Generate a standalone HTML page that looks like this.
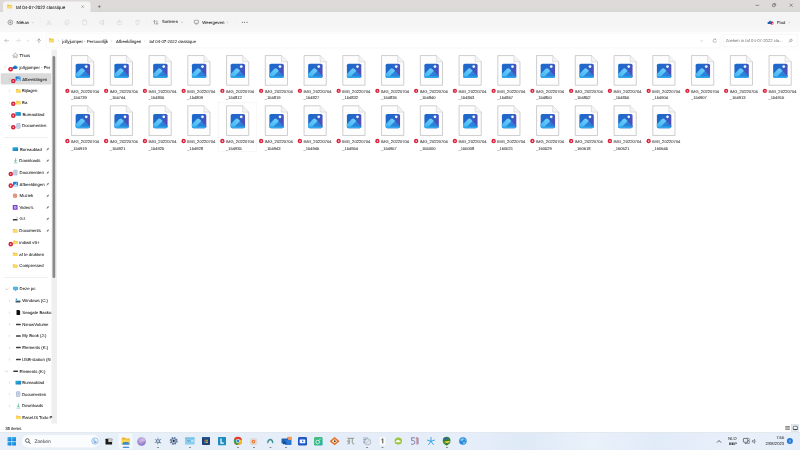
<!DOCTYPE html>
<html lang="nl">
<head>
<meta charset="utf-8">
<title>taf 04-07-2022 classique</title>
<style>
*{margin:0;padding:0;box-sizing:border-box}
html,body{width:3200px;height:1800px;overflow:hidden;background:#fff}
body{font-family:"Liberation Sans",sans-serif;color:#1b1b1b;position:relative}
.a{position:absolute}
.t{position:absolute;white-space:nowrap;line-height:1;color:#222;-webkit-text-stroke:0.24px currentColor}
svg{position:absolute;overflow:visible}
#titlebar{left:0;top:0;width:3200px;height:48px;background:linear-gradient(#dedad9,#dddad9 72%,#d8d8d6 80%,#d7d7d5)}
#tab{left:12px;top:6.4px;width:350.4px;height:42.4px;background:#f4f4f4;border-radius:12px 12px 0 0}
#toolbar{left:0;top:48px;width:3200px;height:78.8px;background:linear-gradient(#f4f4f4,#f5f5f5 70%,#f9f9f9);border-bottom:2.4px solid #e3e3e3}
#navrow{left:0;top:126.4px;width:3200px;height:73.6px;background:#fefefe}
#addr{left:184.8px;top:132px;width:2696px;height:60px;background:#fff;border:2px solid #f1f1f1;border-radius:6px}
#search{left:2892px;top:136.8px;width:298px;height:51.2px;background:#fff;border:2px solid #eeeeee;border-radius:6px}
#sel{left:3.2px;top:293.2px;width:201.6px;height:44.4px;background:#dadada;border-radius:4px}
#track{left:205.6px;top:198.4px;width:22.4px;height:1496px;background:#efefef}
#thumb{left:209.6px;top:224px;width:11.2px;height:888px;background:#898989;border-radius:5.6px}
#taskbar{left:0;top:1727.6px;width:3200px;height:72.4px;background:linear-gradient(90deg,#e9f0f9 0%,#e7eff9 20%,#e4edf8 45%,#e6eef9 58%,#dfeaf7 66%,#e9f1fa 74%,#e1ebf8 82%,#e8f0fa 92%,#e6eff9 100%);border-top:2.4px solid #d4dae1}
#pill{left:86px;top:1738px;width:313.2px;height:52.8px;background:#fbfcfe;border-radius:26.8px;border:1.6px solid #dde3ea}
.sep{position:absolute;height:2.4px;background:#e4dcdc;left:14.4px;width:177.6px}
.lbl{position:absolute;white-space:nowrap;font-size:16.32px;line-height:25.6px;color:#333;-webkit-text-stroke:0.24px currentColor}
.badge{position:absolute;width:18.4px;height:18.4px;border-radius:50%;background:#d8203a}
.badge:after{content:"";position:absolute;left:6px;top:6px;width:6.4px;height:6.4px;border-radius:50%;background:#f7c9cf}

html,body{width:800px;height:450px}
#root{filter:blur(0);text-rendering:geometricPrecision;position:absolute;left:0;top:0;width:3200px;height:1800px;transform:scale(0.25);transform-origin:0 0;overflow:hidden;background:#fff}
</style>
</head>
<body>
<div id="root">
<div class="a" id="titlebar"></div>
<div class="a" id="tab"></div>
<div class="a" id="toolbar"></div>
<div class="a" id="navrow"></div>
<div class="a" id="addr"></div>
<div class="a" id="search"></div>
<svg style="left:28px;top:16.8px" width="20.8" height="17.2" viewBox="0 0 10 8.2"><path d="M0.3 0.9 Q0.3 0.3 0.9 0.3 L3.6 0.3 L4.8 1.6 L9.3 1.6 Q9.8 1.6 9.8 2.2 L9.8 7.4 Q9.8 7.9 9.3 7.9 L0.8 7.9 Q0.3 7.9 0.3 7.4 Z" fill="#ecbb3a"/><path d="M0.3 2.6 L9.8 2.6 L9.8 7.4 Q9.8 7.9 9.3 7.9 L0.8 7.9 Q0.3 7.9 0.3 7.4 Z" fill="#fbdb68"/></svg>
<div class="t" style="left:63.6px;top:19px;font-size:18px;color:#1a1a1a;">taf 04-07-2022 classique</div>
<svg style="left:324.8px;top:20.8px" width="11.2" height="11.2" viewBox="0 0 2.8 2.8"><path d="M0.2 0.2 L2.6 2.6 M2.6 0.2 L0.2 2.6" stroke="#444" stroke-width="0.35"/></svg>
<svg style="left:391.2px;top:19.6px" width="12.8" height="12.8" viewBox="0 0 3.2 3.2"><path d="M1.6 0 V3.2 M0 1.6 H3.2" stroke="#333" stroke-width="0.4"/></svg>
<svg style="left:3021.6px;top:20.4px" width="14.4" height="4" viewBox="0 0 3.6 1"><path d="M0 0.3 H3.6" stroke="#333" stroke-width="0.45"/></svg>
<svg style="left:3089.2px;top:12.8px" width="14.4" height="14.4" viewBox="0 0 3.6 3.6"><rect x="0.2" y="0.9" width="2.5" height="2.5" rx="0.5" fill="none" stroke="#333" stroke-width="0.45"/><path d="M1 0.3 H2.8 Q3.4 0.3 3.4 0.9 V2.6" fill="none" stroke="#333" stroke-width="0.45"/></svg>
<svg style="left:3158px;top:14.4px" width="13.6" height="13.6" viewBox="0 0 3.4 3.4"><path d="M0.2 0.2 L3.2 3.2 M3.2 0.2 L0.2 3.2" stroke="#333" stroke-width="0.45"/></svg>
<svg style="left:30.8px;top:78.8px" width="20.8" height="20.8" viewBox="0 0 5.2 5.2"><circle cx="2.6" cy="2.6" r="2.35" fill="none" stroke="#333" stroke-width="0.4"/><path d="M2.6 1.4 V3.8 M1.4 2.6 H3.8" stroke="#444" stroke-width="0.4"/></svg>
<div class="t" style="left:66.4px;top:79.88px;font-size:17.8px;color:#1f1f1f;">Nieuw</div>
<svg style="left:127.2px;top:86.8px" width="8" height="6.4" viewBox="0 0 2.4 1.6"><path d="M0.2 0.3 L1.2 1.3 L2.2 0.3" fill="none" stroke="#888" stroke-width="0.35" stroke-linecap="round" stroke-linejoin="round"/></svg>
<div class="a" style="left:161.2px;top:70px;width:2px;height:38px;background:#efefef"></div>
<svg style="left:186.4px;top:78.8px" width="20" height="20.8" viewBox="0 0 5 5.2"><path d="M1.2 0.3 L3.4 3.6 M3.8 0.3 L1.6 3.6" stroke="#c6cdd5" stroke-width="0.4" fill="none"/><circle cx="1.2" cy="4.2" r="0.75" fill="none" stroke="#c6cdd5" stroke-width="0.4"/><circle cx="3.8" cy="4.2" r="0.75" fill="none" stroke="#c6cdd5" stroke-width="0.4"/></svg>
<svg style="left:258.4px;top:78.8px" width="20" height="20.8" viewBox="0 0 5 5.2"><rect x="1.5" y="0.3" width="3" height="3.8" rx="0.6" fill="none" stroke="#c6cdd5" stroke-width="0.4"/><path d="M0.5 1.4 V4.3 Q0.5 4.9 1.1 4.9 H3.3" fill="none" stroke="#c6cdd5" stroke-width="0.4"/></svg>
<svg style="left:328px;top:78.4px" width="20" height="21.6" viewBox="0 0 5 5.4"><rect x="0.5" y="0.8" width="4" height="4.3" rx="0.6" fill="none" stroke="#c6cdd5" stroke-width="0.4"/><rect x="1.6" y="0.2" width="1.8" height="1.2" rx="0.3" fill="#f4f4f4" stroke="#c6cdd5" stroke-width="0.35"/></svg>
<svg style="left:397.6px;top:78.8px" width="20.8" height="20.8" viewBox="0 0 5.2 5.2"><rect x="0.3" y="1.2" width="3.4" height="2.8" rx="0.5" fill="none" stroke="#c6cdd5" stroke-width="0.4"/><path d="M3.9 0.3 V4.9 M3.2 0.3 H4.6 M3.2 4.9 H4.6" stroke="#c6cdd5" stroke-width="0.4" fill="none"/></svg>
<svg style="left:468px;top:78.8px" width="20" height="20.8" viewBox="0 0 5 5.2"><rect x="0.4" y="1.6" width="4.1" height="3.2" rx="0.5" fill="none" stroke="#c6cdd5" stroke-width="0.4"/><path d="M2.45 3 V0.3 M1.5 1.2 L2.45 0.3 L3.4 1.2" stroke="#c6cdd5" stroke-width="0.4" fill="none"/></svg>
<svg style="left:540.4px;top:78.8px" width="20" height="20.8" viewBox="0 0 5 5.2"><path d="M0.4 1.1 H4.6 M1.7 1.1 Q1.7 0.3 2.5 0.3 Q3.3 0.3 3.3 1.1 M0.9 1.1 L1.3 4.5 Q1.35 4.9 1.8 4.9 H3.2 Q3.65 4.9 3.7 4.5 L4.1 1.1" stroke="#c6cdd5" stroke-width="0.4" fill="none"/></svg>
<div class="a" style="left:584.8px;top:70px;width:2px;height:38px;background:#efefef"></div>
<svg style="left:612.8px;top:79.6px" width="20" height="19.2" viewBox="0 0 5 4.8"><path d="M1.2 4.4 V0.5 M0.2 1.5 L1.2 0.4 L2.2 1.5" stroke="#3a3a3a" stroke-width="0.4" fill="none"/><path d="M3.7 0.4 V4.3 M2.7 3.3 L3.7 4.4 L4.7 3.3" stroke="#3a3a3a" stroke-width="0.4" fill="none"/></svg>
<div class="t" style="left:647.6px;top:80.4px;font-size:16.8px;color:#1f1f1f;">Sorteren</div>
<svg style="left:724px;top:86.8px" width="8" height="6.4" viewBox="0 0 2.4 1.6"><path d="M0.2 0.3 L1.2 1.3 L2.2 0.3" fill="none" stroke="#888" stroke-width="0.35" stroke-linecap="round" stroke-linejoin="round"/></svg>
<svg style="left:775.6px;top:80.4px" width="19.2" height="17.6" viewBox="0 0 4.8 4.4"><rect x="0.3" y="0.3" width="4.2" height="3" rx="0.5" fill="none" stroke="#3a3a3a" stroke-width="0.4"/><path d="M1.4 4.1 H3.4" stroke="#3a3a3a" stroke-width="0.4"/></svg>
<div class="t" style="left:809.2px;top:80.16px;font-size:17.32px;color:#1f1f1f;">Weergeven</div>
<svg style="left:906.4px;top:86.8px" width="8" height="6.4" viewBox="0 0 2.4 1.6"><path d="M0.2 0.3 L1.2 1.3 L2.2 0.3" fill="none" stroke="#888" stroke-width="0.35" stroke-linecap="round" stroke-linejoin="round"/></svg>
<div class="a" style="left:942px;top:70px;width:2px;height:38px;background:#efefef"></div>
<svg style="left:967.2px;top:87.2px" width="24" height="4.8" viewBox="0 0 6 1.2"><circle cx="0.55" cy="0.6" r="0.5" fill="#333"/><circle cx="2.9" cy="0.6" r="0.5" fill="#333"/><circle cx="5.25" cy="0.6" r="0.5" fill="#333"/></svg>
<svg style="left:3070.4px;top:81.6px" width="21.6" height="14.4" viewBox="0 0 5.4 3.6"><path d="M1.3 3.4 Q0.1 3.4 0.1 2.4 Q0.1 1.5 1.1 1.4 Q1.5 0.2 2.8 0.2 Q3.9 0.2 4.3 1.2 Q5.3 1.3 5.3 2.3 Q5.3 3.4 4.2 3.4 Z" fill="#1c7fd8"/><path d="M1.3 3.4 Q0.1 3.4 0.1 2.4 Q0.1 1.5 1.1 1.4 Q1.8 1.3 2.4 1.9 L4.4 3.4 Z" fill="#1460b8"/></svg>
<div class="badge" style="left:3081.6px;top:86.4px;width:12.8px;height:12.8px"></div>
<div class="t" style="left:3107.6px;top:81px;font-size:17.2px;color:#1f1f1f;">Fout</div>
<svg style="left:3152.8px;top:87.2px" width="8" height="6.4" viewBox="0 0 2.4 1.6"><path d="M0.2 0.3 L1.2 1.3 L2.2 0.3" fill="none" stroke="#888" stroke-width="0.35" stroke-linecap="round" stroke-linejoin="round"/></svg>
<svg style="left:18.4px;top:155.2px" width="17.6" height="15.2" viewBox="0 0 4.4 3.8"><path d="M4.2 1.9 H0.4 M2 0.3 L0.4 1.9 L2 3.5" stroke="#8c8c8c" stroke-width="0.42" fill="none" stroke-linecap="round" stroke-linejoin="round"/></svg>
<svg style="left:64px;top:155.2px" width="17.6" height="15.2" viewBox="0 0 4.4 3.8"><path d="M0.2 1.9 H4 M2.4 0.3 L4 1.9 L2.4 3.5" stroke="#c4c4c4" stroke-width="0.42" fill="none" stroke-linecap="round" stroke-linejoin="round"/></svg>
<svg style="left:108px;top:159.68px" width="8.8" height="7.04" viewBox="0 0 2.4 1.6"><path d="M0.2 0.3 L1.2 1.3 L2.2 0.3" fill="none" stroke="#8c8c8c" stroke-width="0.32" stroke-linecap="round" stroke-linejoin="round"/></svg>
<svg style="left:147.6px;top:154.4px" width="15.2" height="17.6" viewBox="0 0 3.8 4.4"><path d="M1.9 4.2 V0.4 M0.3 2 L1.9 0.4 L3.5 2" stroke="#555" stroke-width="0.42" fill="none" stroke-linecap="round" stroke-linejoin="round"/></svg>
<svg style="left:195.2px;top:152.4px" width="21.6" height="17.6" viewBox="0 0 10 8.2"><path d="M0.3 0.9 Q0.3 0.3 0.9 0.3 L3.6 0.3 L4.8 1.6 L9.3 1.6 Q9.8 1.6 9.8 2.2 L9.8 7.4 Q9.8 7.9 9.3 7.9 L0.8 7.9 Q0.3 7.9 0.3 7.4 Z" fill="#ecbb3a"/><path d="M0.3 2.6 L9.8 2.6 L9.8 7.4 Q9.8 7.9 9.3 7.9 L0.8 7.9 Q0.3 7.9 0.3 7.4 Z" fill="#fbdb68"/></svg>
<svg style="left:230.6px;top:160.56px" width="4.4" height="5.28" viewBox="0 0 2 2.4"><path d="M0.5 0.2 L1.6 1.2 L0.5 2.2" fill="none" stroke="#888" stroke-width="0.51" stroke-linecap="round" stroke-linejoin="round"/></svg>
<div class="t" style="left:248.8px;top:156.16px;font-size:17.32px;color:#2a2a2a;">jollyjumper - Persoonlijk</div>
<svg style="left:444.6px;top:160.56px" width="4.4" height="5.28" viewBox="0 0 2 2.4"><path d="M0.5 0.2 L1.6 1.2 L0.5 2.2" fill="none" stroke="#888" stroke-width="0.51" stroke-linecap="round" stroke-linejoin="round"/></svg>
<div class="t" style="left:464px;top:156.16px;font-size:17.32px;color:#2a2a2a;">Afbeeldingen</div>
<svg style="left:578.2px;top:160.56px" width="4.4" height="5.28" viewBox="0 0 2 2.4"><path d="M0.5 0.2 L1.6 1.2 L0.5 2.2" fill="none" stroke="#888" stroke-width="0.51" stroke-linecap="round" stroke-linejoin="round"/></svg>
<div class="t" style="left:597.6px;top:156.28px;font-size:17.04px;color:#2a2a2a;">taf 04-07-2022 classique</div>
<svg style="left:2801.6px;top:159.76px" width="9.6" height="7.68" viewBox="0 0 2.4 1.6"><path d="M0.2 0.3 L1.2 1.3 L2.2 0.3" fill="none" stroke="#777" stroke-width="0.29" stroke-linecap="round" stroke-linejoin="round"/></svg>
<svg style="left:2849.6px;top:154px" width="17.6" height="17.6" viewBox="0 0 4.4 4.4"><path d="M3.9 2.2 A1.7 1.7 0 1 1 3.2 0.85" stroke="#666" stroke-width="0.4" fill="none"/><path d="M3.3 0 V1 H2.3" stroke="#666" stroke-width="0.4" fill="none"/></svg>
<div class="t" style="left:2902.8px;top:154.4px;font-size:16.8px;color:#707070;-webkit-text-stroke:0">Zoeken in taf 04-07-2022 cla...</div>
<svg style="left:3155.2px;top:155.2px" width="15.2" height="15.2" viewBox="0 0 3.8 3.8"><circle cx="2.3" cy="1.5" r="1.2" fill="none" stroke="#555" stroke-width="0.4"/><path d="M1.4 2.4 L0.3 3.5" stroke="#555" stroke-width="0.45" stroke-linecap="round"/></svg>
<div class="a" id="track"></div>
<div class="a" id="thumb"></div>
<div class="a" id="sel"></div>
<svg style="left:49.6px;top:211.2px" width="22.4" height="20.8" viewBox="0 0 5.6 5.2"><path d="M0.3 2.6 L2.8 0.4 L5.3 2.6" fill="none" stroke="#8d7d74" stroke-width="0.6" stroke-linejoin="round" stroke-linecap="round"/><path d="M1 2.4 V4.9 H2.2 V3.4 H3.4 V4.9 H4.6 V2.4" fill="#f3e6da" stroke="#a08b7d" stroke-width="0.5" stroke-linejoin="round"/></svg>
<div class="t" style="left:78.4px;top:213.84px;font-size:17.12px;color:#222;">Thuis</div>
<svg style="left:19.4px;top:265.6px" width="6" height="4.8" viewBox="0 0 2.4 1.6"><path d="M0.2 0.3 L1.2 1.3 L2.2 0.3" fill="none" stroke="#555" stroke-width="0.40" stroke-linecap="round" stroke-linejoin="round"/></svg>
<svg style="left:50.4px;top:260.8px" width="21.6" height="14.4" viewBox="0 0 5.4 3.6"><path d="M1.3 3.4 Q0.1 3.4 0.1 2.4 Q0.1 1.5 1.1 1.4 Q1.5 0.2 2.8 0.2 Q3.9 0.2 4.3 1.2 Q5.3 1.3 5.3 2.3 Q5.3 3.4 4.2 3.4 Z" fill="#1c7fd8"/><path d="M1.3 3.4 Q0.1 3.4 0.1 2.4 Q0.1 1.5 1.1 1.4 Q1.8 1.3 2.4 1.9 L4.4 3.4 Z" fill="#1460b8"/></svg>
<div class="badge" style="left:33.2px;top:267.6px;width:18.4px;height:18.4px"></div>
<div class="t" style="left:77.6px;top:261.84px;font-size:17.12px;color:#222;">jollyjumper - Per</div>
<svg style="left:34.8px;top:312.96px" width="6.4" height="7.68" viewBox="0 0 2 2.4"><path d="M0.5 0.2 L1.6 1.2 L0.5 2.2" fill="none" stroke="#999" stroke-width="0.37" stroke-linecap="round" stroke-linejoin="round"/></svg>
<svg style="left:62.4px;top:306.4px" width="20" height="18.4" viewBox="0 0 5 4.6"><rect x="0" y="0" width="5" height="4.6" rx="0.6" fill="#1f7fd6"/><path d="M0.4 4.3 L2.3 2 L3.3 3.1 L3.8 2.6 L4.7 4.3 Z" fill="#bfe4fb"/><circle cx="3.7" cy="1.3" r="0.55" fill="#e9f6ff"/></svg>
<div class="badge" style="left:43.6px;top:314.8px;width:18.4px;height:18.4px"></div>
<div class="t" style="left:88.8px;top:308.64px;font-size:17.12px;color:#222;">Afbeeldingen</div>
<svg style="left:34.8px;top:359.36px" width="6.4" height="7.68" viewBox="0 0 2 2.4"><path d="M0.5 0.2 L1.6 1.2 L0.5 2.2" fill="none" stroke="#999" stroke-width="0.37" stroke-linecap="round" stroke-linejoin="round"/></svg>
<svg style="left:64px;top:354.8px" width="19.2" height="15.6" viewBox="0 0 10 8.2"><path d="M0.3 0.9 Q0.3 0.3 0.9 0.3 L3.6 0.3 L4.8 1.6 L9.3 1.6 Q9.8 1.6 9.8 2.2 L9.8 7.4 Q9.8 7.9 9.3 7.9 L0.8 7.9 Q0.3 7.9 0.3 7.4 Z" fill="#ecbb3a"/><path d="M0.3 2.6 L9.8 2.6 L9.8 7.4 Q9.8 7.9 9.3 7.9 L0.8 7.9 Q0.3 7.9 0.3 7.4 Z" fill="#fbdb68"/></svg>
<div class="t" style="left:88.4px;top:354.64px;font-size:17.12px;color:#222;">Bijlagen</div>
<svg style="left:34.8px;top:406.56px" width="6.4" height="7.68" viewBox="0 0 2 2.4"><path d="M0.5 0.2 L1.6 1.2 L0.5 2.2" fill="none" stroke="#999" stroke-width="0.37" stroke-linecap="round" stroke-linejoin="round"/></svg>
<svg style="left:64px;top:401.6px" width="19.2" height="15.6" viewBox="0 0 10 8.2"><path d="M0.3 0.9 Q0.3 0.3 0.9 0.3 L3.6 0.3 L4.8 1.6 L9.3 1.6 Q9.8 1.6 9.8 2.2 L9.8 7.4 Q9.8 7.9 9.3 7.9 L0.8 7.9 Q0.3 7.9 0.3 7.4 Z" fill="#ecbb3a"/><path d="M0.3 2.6 L9.8 2.6 L9.8 7.4 Q9.8 7.9 9.3 7.9 L0.8 7.9 Q0.3 7.9 0.3 7.4 Z" fill="#fbdb68"/></svg>
<div class="badge" style="left:43.6px;top:406px;width:18.4px;height:18.4px"></div>
<div class="t" style="left:88.4px;top:402.24px;font-size:17.12px;color:#222;">Ba</div>
<svg style="left:34.8px;top:452.96px" width="6.4" height="7.68" viewBox="0 0 2 2.4"><path d="M0.5 0.2 L1.6 1.2 L0.5 2.2" fill="none" stroke="#999" stroke-width="0.37" stroke-linecap="round" stroke-linejoin="round"/></svg>
<svg style="left:60.8px;top:448px" width="22.4" height="15.2" viewBox="0 0 5.6 3.8"><defs><linearGradient id="g0" x1="0" y1="0" x2="1" y2="1"><stop offset="0" stop-color="#2fb6d8"/><stop offset="1" stop-color="#1a78c2"/></linearGradient></defs><rect x="0" y="0" width="5.6" height="3.8" rx="0.5" fill="url(#g0)"/></svg>
<div class="badge" style="left:43.6px;top:453.2px;width:18.4px;height:18.4px"></div>
<div class="t" style="left:89.6px;top:448.24px;font-size:17.12px;color:#222;">Bureaublad</div>
<svg style="left:34.8px;top:500.16px" width="6.4" height="7.68" viewBox="0 0 2 2.4"><path d="M0.5 0.2 L1.6 1.2 L0.5 2.2" fill="none" stroke="#999" stroke-width="0.37" stroke-linecap="round" stroke-linejoin="round"/></svg>
<svg style="left:66.4px;top:493.2px" width="15.2" height="20.8" viewBox="0 0 3.8 5.2"><rect x="0.2" y="0.2" width="3.4" height="4.8" rx="0.5" fill="#e3ebf3" stroke="#6f8fb8" stroke-width="0.5"/><path d="M0.9 1.4H2.9M0.9 2.4H2.9M0.9 3.4H2.9" stroke="#7f9cc0" stroke-width="0.4"/></svg>
<div class="badge" style="left:43.6px;top:500px;width:18.4px;height:18.4px"></div>
<div class="t" style="left:88.4px;top:495.44px;font-size:17.12px;color:#222;">Documenten</div>
<div class="sep" style="top:548.8px"></div>
<svg style="left:49.6px;top:588.8px" width="22.4" height="15.2" viewBox="0 0 5.6 3.8"><defs><linearGradient id="g1" x1="0" y1="0" x2="1" y2="1"><stop offset="0" stop-color="#2fb6d8"/><stop offset="1" stop-color="#1a78c2"/></linearGradient></defs><rect x="0" y="0" width="5.6" height="3.8" rx="0.5" fill="url(#g1)"/></svg>
<div class="t" style="left:80px;top:587.84px;font-size:17.12px;color:#222;">Bureaublad</div>
<svg style="left:183.6px;top:589.6px" width="13.6" height="13.6" viewBox="0 0 3 3"><path d="M1.9 0.2 L2.8 1.1 L2.3 1.4 L1.8 2.1 L1.5 2.4 L0.6 1.5 L0.9 1.2 L1.6 0.7 Z" fill="#7d7d7d"/><path d="M1 2 L0.2 2.8" stroke="#7d7d7d" stroke-width="0.4"/></svg>
<svg style="left:56px;top:632.8px" width="12.8" height="20.8" viewBox="0 0 3.2 5.2"><path d="M1.6 0.2 V3.2 M0.5 2.3 L1.6 3.4 L2.7 2.3" stroke="#21a366" stroke-width="0.55" fill="none" stroke-linecap="round" stroke-linejoin="round"/><path d="M0.3 4.6 H2.9" stroke="#3ea9c9" stroke-width="0.6" stroke-linecap="round"/></svg>
<div class="t" style="left:77.2px;top:634.64px;font-size:17.12px;color:#222;">Downloads</div>
<svg style="left:183.6px;top:636.4px" width="13.6" height="13.6" viewBox="0 0 3 3"><path d="M1.9 0.2 L2.8 1.1 L2.3 1.4 L1.8 2.1 L1.5 2.4 L0.6 1.5 L0.9 1.2 L1.6 0.7 Z" fill="#7d7d7d"/><path d="M1 2 L0.2 2.8" stroke="#7d7d7d" stroke-width="0.4"/></svg>
<svg style="left:53.6px;top:680px" width="15.2" height="20.8" viewBox="0 0 3.8 5.2"><rect x="0.2" y="0.2" width="3.4" height="4.8" rx="0.5" fill="#e3ebf3" stroke="#6f8fb8" stroke-width="0.5"/><path d="M0.9 1.4H2.9M0.9 2.4H2.9M0.9 3.4H2.9" stroke="#7f9cc0" stroke-width="0.4"/></svg>
<div class="badge" style="left:34px;top:686.8px;width:18.4px;height:18.4px"></div>
<div class="t" style="left:78.4px;top:681.84px;font-size:17.12px;color:#222;">Documenten</div>
<svg style="left:183.6px;top:683.6px" width="13.6" height="13.6" viewBox="0 0 3 3"><path d="M1.9 0.2 L2.8 1.1 L2.3 1.4 L1.8 2.1 L1.5 2.4 L0.6 1.5 L0.9 1.2 L1.6 0.7 Z" fill="#7d7d7d"/><path d="M1 2 L0.2 2.8" stroke="#7d7d7d" stroke-width="0.4"/></svg>
<svg style="left:52px;top:727.2px" width="20" height="18.4" viewBox="0 0 5 4.6"><rect x="0" y="0" width="5" height="4.6" rx="0.6" fill="#1f7fd6"/><path d="M0.4 4.3 L2.3 2 L3.3 3.1 L3.8 2.6 L4.7 4.3 Z" fill="#bfe4fb"/><circle cx="3.7" cy="1.3" r="0.55" fill="#e9f6ff"/></svg>
<div class="badge" style="left:34px;top:733.2px;width:18.4px;height:18.4px"></div>
<div class="t" style="left:78.4px;top:728.24px;font-size:17.12px;color:#222;">Afbeeldingen</div>
<svg style="left:183.6px;top:730px" width="13.6" height="13.6" viewBox="0 0 3 3"><path d="M1.9 0.2 L2.8 1.1 L2.3 1.4 L1.8 2.1 L1.5 2.4 L0.6 1.5 L0.9 1.2 L1.6 0.7 Z" fill="#7d7d7d"/><path d="M1 2 L0.2 2.8" stroke="#7d7d7d" stroke-width="0.4"/></svg>
<svg style="left:51.2px;top:774.4px" width="18.4" height="18.4" viewBox="0 0 4.6 4.6"><circle cx="2.3" cy="2.3" r="2.2" fill="#dc7458"/><circle cx="2.3" cy="2.3" r="1.25" fill="none" stroke="#fbe0d6" stroke-width="0.45"/><circle cx="1.9" cy="2.7" r="0.45" fill="#fbe0d6"/></svg>
<div class="t" style="left:78.4px;top:775.04px;font-size:17.12px;color:#222;">Muziek</div>
<svg style="left:183.6px;top:776.8px" width="13.6" height="13.6" viewBox="0 0 3 3"><path d="M1.9 0.2 L2.8 1.1 L2.3 1.4 L1.8 2.1 L1.5 2.4 L0.6 1.5 L0.9 1.2 L1.6 0.7 Z" fill="#7d7d7d"/><path d="M1 2 L0.2 2.8" stroke="#7d7d7d" stroke-width="0.4"/></svg>
<svg style="left:51.2px;top:820.4px" width="19.2" height="19.2" viewBox="0 0 4.8 4.8"><rect x="0" y="0" width="4.8" height="4.8" rx="0.6" fill="#7a3fc6"/><rect x="1.2" y="1.2" width="2.4" height="2.4" rx="0.3" fill="#d9c3f6"/><path d="M2 1.8 L3 2.4 L2 3 Z" fill="#7a3fc6"/></svg>
<div class="t" style="left:78.4px;top:821.44px;font-size:17.12px;color:#222;">Video's</div>
<svg style="left:183.6px;top:823.2px" width="13.6" height="13.6" viewBox="0 0 3 3"><path d="M1.9 0.2 L2.8 1.1 L2.3 1.4 L1.8 2.1 L1.5 2.4 L0.6 1.5 L0.9 1.2 L1.6 0.7 Z" fill="#7d7d7d"/><path d="M1 2 L0.2 2.8" stroke="#7d7d7d" stroke-width="0.4"/></svg>
<svg style="left:51.2px;top:867.2px" width="19.2" height="16" viewBox="0 0 4.8 4"><path d="M3.4 0.4 L4.6 0.4 L4.6 2.4" fill="none" stroke="#9aa3ab" stroke-width="0.5"/><rect x="0" y="2.3" width="4.8" height="1.5" rx="0.4" fill="#3d3d3d"/></svg>
<div class="t" style="left:78.4px;top:867.44px;font-size:17.12px;color:#222;">G:\</div>
<svg style="left:183.6px;top:869.2px" width="13.6" height="13.6" viewBox="0 0 3 3"><path d="M1.9 0.2 L2.8 1.1 L2.3 1.4 L1.8 2.1 L1.5 2.4 L0.6 1.5 L0.9 1.2 L1.6 0.7 Z" fill="#7d7d7d"/><path d="M1 2 L0.2 2.8" stroke="#7d7d7d" stroke-width="0.4"/></svg>
<svg style="left:51.2px;top:915.2px" width="19.2" height="15.6" viewBox="0 0 10 8.2"><path d="M0.3 0.9 Q0.3 0.3 0.9 0.3 L3.6 0.3 L4.8 1.6 L9.3 1.6 Q9.8 1.6 9.8 2.2 L9.8 7.4 Q9.8 7.9 9.3 7.9 L0.8 7.9 Q0.3 7.9 0.3 7.4 Z" fill="#ecbb3a"/><path d="M0.3 2.6 L9.8 2.6 L9.8 7.4 Q9.8 7.9 9.3 7.9 L0.8 7.9 Q0.3 7.9 0.3 7.4 Z" fill="#fbdb68"/></svg>
<div class="t" style="left:77.2px;top:914.64px;font-size:17.12px;color:#222;">Documents</div>
<svg style="left:183.6px;top:916.4px" width="13.6" height="13.6" viewBox="0 0 3 3"><path d="M1.9 0.2 L2.8 1.1 L2.3 1.4 L1.8 2.1 L1.5 2.4 L0.6 1.5 L0.9 1.2 L1.6 0.7 Z" fill="#7d7d7d"/><path d="M1 2 L0.2 2.8" stroke="#7d7d7d" stroke-width="0.4"/></svg>
<svg style="left:52px;top:961.2px" width="19.2" height="15.6" viewBox="0 0 10 8.2"><path d="M0.3 0.9 Q0.3 0.3 0.9 0.3 L3.6 0.3 L4.8 1.6 L9.3 1.6 Q9.8 1.6 9.8 2.2 L9.8 7.4 Q9.8 7.9 9.3 7.9 L0.8 7.9 Q0.3 7.9 0.3 7.4 Z" fill="#ecbb3a"/><path d="M0.3 2.6 L9.8 2.6 L9.8 7.4 Q9.8 7.9 9.3 7.9 L0.8 7.9 Q0.3 7.9 0.3 7.4 Z" fill="#fbdb68"/></svg>
<div class="badge" style="left:34px;top:967.2px;width:18.4px;height:18.4px"></div>
<div class="t" style="left:77.2px;top:962.24px;font-size:17.12px;color:#222;">indiwit v9+</div>
<svg style="left:51.2px;top:1009.2px" width="19.2" height="15.6" viewBox="0 0 10 8.2"><path d="M0.3 0.9 Q0.3 0.3 0.9 0.3 L3.6 0.3 L4.8 1.6 L9.3 1.6 Q9.8 1.6 9.8 2.2 L9.8 7.4 Q9.8 7.9 9.3 7.9 L0.8 7.9 Q0.3 7.9 0.3 7.4 Z" fill="#ecbb3a"/><path d="M0.3 2.6 L9.8 2.6 L9.8 7.4 Q9.8 7.9 9.3 7.9 L0.8 7.9 Q0.3 7.9 0.3 7.4 Z" fill="#fbdb68"/></svg>
<div class="t" style="left:77.2px;top:1008.64px;font-size:17.12px;color:#222;">af te drukken</div>
<svg style="left:51.2px;top:1056px" width="19.2" height="15.6" viewBox="0 0 10 8.2"><path d="M0.3 0.9 Q0.3 0.3 0.9 0.3 L3.6 0.3 L4.8 1.6 L9.3 1.6 Q9.8 1.6 9.8 2.2 L9.8 7.4 Q9.8 7.9 9.3 7.9 L0.8 7.9 Q0.3 7.9 0.3 7.4 Z" fill="#ecbb3a"/><path d="M0.3 2.6 L9.8 2.6 L9.8 7.4 Q9.8 7.9 9.3 7.9 L0.8 7.9 Q0.3 7.9 0.3 7.4 Z" fill="#fbdb68"/></svg>
<div class="t" style="left:77.2px;top:1055.44px;font-size:17.12px;color:#222;">Compressed</div>
<div class="sep" style="top:1108px;background:#e2e2e2"></div>
<svg style="left:21.6px;top:1152.64px" width="10.4" height="8.32" viewBox="0 0 2.4 1.6"><path d="M0.2 0.3 L1.2 1.3 L2.2 0.3" fill="none" stroke="#7a5c5c" stroke-width="0.31" stroke-linecap="round" stroke-linejoin="round"/></svg>
<svg style="left:52.8px;top:1146.8px" width="18.4" height="16.8" viewBox="0 0 4.6 4.2"><rect x="0" y="0" width="4.6" height="3.1" rx="0.4" fill="#2b8bd6"/><rect x="0.4" y="0.4" width="3.8" height="2.1" fill="#48c0ec"/><path d="M1.4 3.9 H3.2 M2.3 3.1 V3.9" stroke="#3a7fb5" stroke-width="0.5"/></svg>
<div class="t" style="left:78.4px;top:1147.04px;font-size:17.12px;color:#222;">Deze pc</div>
<svg style="left:34.8px;top:1199.36px" width="6.4" height="7.68" viewBox="0 0 2 2.4"><path d="M0.5 0.2 L1.6 1.2 L0.5 2.2" fill="none" stroke="#999" stroke-width="0.37" stroke-linecap="round" stroke-linejoin="round"/></svg>
<svg style="left:62.4px;top:1194px" width="20" height="16.8" viewBox="0 0 5 4.2"><rect x="0.2" y="0" width="1.5" height="1.5" fill="#35a7e0"/><rect x="0" y="2.3" width="5" height="1.6" rx="0.4" fill="#4a5560"/><rect x="0.2" y="1.7" width="4.6" height="0.7" fill="#7fb6d6"/></svg>
<div class="t" style="left:89.2px;top:1194.64px;font-size:17.12px;color:#222;">Windows (C:)</div>
<svg style="left:34.8px;top:1246.56px" width="6.4" height="7.68" viewBox="0 0 2 2.4"><path d="M0.5 0.2 L1.6 1.2 L0.5 2.2" fill="none" stroke="#999" stroke-width="0.37" stroke-linecap="round" stroke-linejoin="round"/></svg>
<svg style="left:65.6px;top:1240.4px" width="14.4" height="20" viewBox="0 0 3.6 5"><path d="M0.5 0 H2.6 L3.6 1 V4.6 Q3.6 5 3.2 5 H0.4 Q0 5 0 4.6 V0.5 Q0 0 0.5 0Z" fill="#111"/></svg>
<div class="t" style="left:89.2px;top:1241.84px;font-size:17.12px;color:#222;">Seagate Backu</div>
<svg style="left:34.8px;top:1293.76px" width="6.4" height="7.68" viewBox="0 0 2 2.4"><path d="M0.5 0.2 L1.6 1.2 L0.5 2.2" fill="none" stroke="#999" stroke-width="0.37" stroke-linecap="round" stroke-linejoin="round"/></svg>
<svg style="left:64px;top:1289.6px" width="19.2" height="12" viewBox="0 0 4.8 3"><rect x="0" y="1.2" width="4.8" height="1.5" rx="0.5" fill="#3d3d3d"/></svg>
<div class="t" style="left:89.2px;top:1289.04px;font-size:17.12px;color:#222;">NieuwVolume</div>
<svg style="left:34.8px;top:1340.16px" width="6.4" height="7.68" viewBox="0 0 2 2.4"><path d="M0.5 0.2 L1.6 1.2 L0.5 2.2" fill="none" stroke="#999" stroke-width="0.37" stroke-linecap="round" stroke-linejoin="round"/></svg>
<svg style="left:64px;top:1336px" width="19.2" height="12" viewBox="0 0 4.8 3"><rect x="0" y="1.2" width="4.8" height="1.5" rx="0.5" fill="#3d3d3d"/></svg>
<div class="t" style="left:89.2px;top:1335.44px;font-size:17.12px;color:#222;">My Book (J:)</div>
<svg style="left:34.8px;top:1386.56px" width="6.4" height="7.68" viewBox="0 0 2 2.4"><path d="M0.5 0.2 L1.6 1.2 L0.5 2.2" fill="none" stroke="#999" stroke-width="0.37" stroke-linecap="round" stroke-linejoin="round"/></svg>
<svg style="left:64px;top:1382.4px" width="19.2" height="12" viewBox="0 0 4.8 3"><rect x="0" y="1.2" width="4.8" height="1.5" rx="0.5" fill="#3d3d3d"/></svg>
<div class="t" style="left:89.2px;top:1381.84px;font-size:17.12px;color:#222;">Elements (K:)</div>
<svg style="left:34.8px;top:1433.76px" width="6.4" height="7.68" viewBox="0 0 2 2.4"><path d="M0.5 0.2 L1.6 1.2 L0.5 2.2" fill="none" stroke="#999" stroke-width="0.37" stroke-linecap="round" stroke-linejoin="round"/></svg>
<svg style="left:64px;top:1429.6px" width="19.2" height="12" viewBox="0 0 4.8 3"><rect x="0" y="1.2" width="4.8" height="1.5" rx="0.5" fill="#3d3d3d"/></svg>
<div class="t" style="left:88px;top:1429.04px;font-size:17.12px;color:#222;">USB-station (N</div>
<svg style="left:21.2px;top:1481.84px" width="10.4" height="8.32" viewBox="0 0 2.4 1.6"><path d="M0.2 0.3 L1.2 1.3 L2.2 0.3" fill="none" stroke="#7a7a7a" stroke-width="0.31" stroke-linecap="round" stroke-linejoin="round"/></svg>
<svg style="left:52.8px;top:1476.8px" width="19.2" height="12" viewBox="0 0 4.8 3"><rect x="0" y="1.2" width="4.8" height="1.5" rx="0.5" fill="#3d3d3d"/></svg>
<div class="t" style="left:78.4px;top:1476.64px;font-size:17.12px;color:#222;">Elements (K:)</div>
<svg style="left:34.8px;top:1526.56px" width="6.4" height="7.68" viewBox="0 0 2 2.4"><path d="M0.5 0.2 L1.6 1.2 L0.5 2.2" fill="none" stroke="#999" stroke-width="0.37" stroke-linecap="round" stroke-linejoin="round"/></svg>
<svg style="left:61.6px;top:1522.8px" width="22.4" height="15.2" viewBox="0 0 5.6 3.8"><defs><linearGradient id="g2" x1="0" y1="0" x2="1" y2="1"><stop offset="0" stop-color="#2fb6d8"/><stop offset="1" stop-color="#1a78c2"/></linearGradient></defs><rect x="0" y="0" width="5.6" height="3.8" rx="0.5" fill="url(#g2)"/></svg>
<div class="t" style="left:89.2px;top:1521.84px;font-size:17.12px;color:#222;">Bureaublad</div>
<svg style="left:34.8px;top:1572.96px" width="6.4" height="7.68" viewBox="0 0 2 2.4"><path d="M0.5 0.2 L1.6 1.2 L0.5 2.2" fill="none" stroke="#999" stroke-width="0.37" stroke-linecap="round" stroke-linejoin="round"/></svg>
<svg style="left:65.2px;top:1566.4px" width="15.2" height="20.8" viewBox="0 0 3.8 5.2"><rect x="0.2" y="0.2" width="3.4" height="4.8" rx="0.5" fill="#e3ebf3" stroke="#6f8fb8" stroke-width="0.5"/><path d="M0.9 1.4H2.9M0.9 2.4H2.9M0.9 3.4H2.9" stroke="#7f9cc0" stroke-width="0.4"/></svg>
<div class="t" style="left:88px;top:1568.24px;font-size:17.12px;color:#222;">Documenten</div>
<svg style="left:34.8px;top:1620.16px" width="6.4" height="7.68" viewBox="0 0 2 2.4"><path d="M0.5 0.2 L1.6 1.2 L0.5 2.2" fill="none" stroke="#999" stroke-width="0.37" stroke-linecap="round" stroke-linejoin="round"/></svg>
<svg style="left:67.2px;top:1613.6px" width="12.8" height="20.8" viewBox="0 0 3.2 5.2"><path d="M1.6 0.2 V3.2 M0.5 2.3 L1.6 3.4 L2.7 2.3" stroke="#21a366" stroke-width="0.55" fill="none" stroke-linecap="round" stroke-linejoin="round"/><path d="M0.3 4.6 H2.9" stroke="#3ea9c9" stroke-width="0.6" stroke-linecap="round"/></svg>
<div class="t" style="left:88px;top:1615.44px;font-size:17.12px;color:#222;">Downloads</div>
<svg style="left:64px;top:1661.2px" width="19.2" height="15.6" viewBox="0 0 10 8.2"><path d="M0.3 0.9 Q0.3 0.3 0.9 0.3 L3.6 0.3 L4.8 1.6 L9.3 1.6 Q9.8 1.6 9.8 2.2 L9.8 7.4 Q9.8 7.9 9.3 7.9 L0.8 7.9 Q0.3 7.9 0.3 7.4 Z" fill="#ecbb3a"/><path d="M0.3 2.6 L9.8 2.6 L9.8 7.4 Q9.8 7.9 9.3 7.9 L0.8 7.9 Q0.3 7.9 0.3 7.4 Z" fill="#fbdb68"/></svg>
<div class="t" style="left:89.2px;top:1660.64px;font-size:17.12px;color:#222;">EaseUS Todo P</div>
<div class="t" style="left:20.8px;top:1707.08px;font-size:17px;color:#222;">35 items</div>
<svg style="left:3140.8px;top:1704px" width="18.4" height="16" viewBox="0 0 4.6 4"><path d="M0 0.6 H4.6 M0 1.95 H4.6 M0 3.3 H4.6" stroke="#7c7c7c" stroke-width="1"/></svg>
<svg style="left:3164px;top:1697.2px" width="31.6" height="30.4" viewBox="0 0 7.9 7.6"><rect x="0.2" y="0.2" width="7.5" height="7.2" fill="#f1f6fa" stroke="#b3c9db" stroke-width="0.4"/><rect x="2.2" y="2" width="4.2" height="3.4" rx="0.4" fill="#f6f9fb" stroke="#333" stroke-width="0.65"/><path d="M2.3 5.2 H6.3" stroke="#333" stroke-width="0.8"/></svg>
<div class="a" style="left:873.2px;top:408px;width:152px;height:197.2px;border:1.8px solid #e2e2e2"></div>
<svg style="left:284.8px;top:220.8px" width="91.2" height="121.6" viewBox="0 0 22.8 30.4"><defs><linearGradient id="g3" x1="0" y1="0.2" x2="1" y2="0.6"><stop offset="0" stop-color="#1b6acc"/><stop offset="0.55" stop-color="#2a64c8"/><stop offset="1" stop-color="#5649b6"/></linearGradient><linearGradient id="g4" x1="0" y1="1" x2="1" y2="0"><stop offset="0" stop-color="#3fb4f2"/><stop offset="1" stop-color="#74d2fb"/></linearGradient><linearGradient id="g5" x1="0" y1="0" x2="1" y2="1"><stop offset="0" stop-color="#3193e4"/><stop offset="1" stop-color="#2878d6"/></linearGradient></defs><path d="M0.3 0.3 H16.4 L22.5 6.6 V30 H0.3 Z" fill="#fdfdfd" stroke="#a9a9a9" stroke-width="0.55"/><path d="M16.4 0.3 V6.6 H22.5" fill="#f3f3f3" stroke="#c2c2c2" stroke-width="0.45"/><g transform="translate(4.4 8.4)"><rect x="0" y="0" width="14.4" height="14.4" rx="1.7" fill="url(#g3)"/><path d="M6.4 4.9 L14.4 12 V13 H2.6 Z" fill="url(#g5)"/><path d="M0 10.4 L5 5.1 Q6.2 4 7.4 5.1 L9.4 7.1 L3.6 13 H0 Z" fill="url(#g4)"/><path d="M0 12.5 H14.4 V12.7 Q14.4 14.4 12.7 14.4 H1.7 Q0 14.4 0 12.7 Z" fill="#2ea6ea"/><circle cx="10.6" cy="2.9" r="1.35" fill="#f1f9ff"/></g></svg>
<div class="badge" style="left:260.6px;top:354.6px;width:17.6px;height:17.6px"></div>
<div class="lbl" style="left:283.6px;top:354.4px">IMG_20220704<br>_154739</div>
<svg style="left:439.8px;top:220.8px" width="91.2" height="121.6" viewBox="0 0 22.8 30.4"><defs><linearGradient id="g6" x1="0" y1="0.2" x2="1" y2="0.6"><stop offset="0" stop-color="#1b6acc"/><stop offset="0.55" stop-color="#2a64c8"/><stop offset="1" stop-color="#5649b6"/></linearGradient><linearGradient id="g7" x1="0" y1="1" x2="1" y2="0"><stop offset="0" stop-color="#3fb4f2"/><stop offset="1" stop-color="#74d2fb"/></linearGradient><linearGradient id="g8" x1="0" y1="0" x2="1" y2="1"><stop offset="0" stop-color="#3193e4"/><stop offset="1" stop-color="#2878d6"/></linearGradient></defs><path d="M0.3 0.3 H16.4 L22.5 6.6 V30 H0.3 Z" fill="#fdfdfd" stroke="#a9a9a9" stroke-width="0.55"/><path d="M16.4 0.3 V6.6 H22.5" fill="#f3f3f3" stroke="#c2c2c2" stroke-width="0.45"/><g transform="translate(4.4 8.4)"><rect x="0" y="0" width="14.4" height="14.4" rx="1.7" fill="url(#g6)"/><path d="M6.4 4.9 L14.4 12 V13 H2.6 Z" fill="url(#g8)"/><path d="M0 10.4 L5 5.1 Q6.2 4 7.4 5.1 L9.4 7.1 L3.6 13 H0 Z" fill="url(#g7)"/><path d="M0 12.5 H14.4 V12.7 Q14.4 14.4 12.7 14.4 H1.7 Q0 14.4 0 12.7 Z" fill="#2ea6ea"/><circle cx="10.6" cy="2.9" r="1.35" fill="#f1f9ff"/></g></svg>
<div class="badge" style="left:415.6px;top:354.6px;width:17.6px;height:17.6px"></div>
<div class="lbl" style="left:438.6px;top:354.4px">IMG_20220704<br>_154744</div>
<svg style="left:594.8px;top:220.8px" width="91.2" height="121.6" viewBox="0 0 22.8 30.4"><defs><linearGradient id="g9" x1="0" y1="0.2" x2="1" y2="0.6"><stop offset="0" stop-color="#1b6acc"/><stop offset="0.55" stop-color="#2a64c8"/><stop offset="1" stop-color="#5649b6"/></linearGradient><linearGradient id="g10" x1="0" y1="1" x2="1" y2="0"><stop offset="0" stop-color="#3fb4f2"/><stop offset="1" stop-color="#74d2fb"/></linearGradient><linearGradient id="g11" x1="0" y1="0" x2="1" y2="1"><stop offset="0" stop-color="#3193e4"/><stop offset="1" stop-color="#2878d6"/></linearGradient></defs><path d="M0.3 0.3 H16.4 L22.5 6.6 V30 H0.3 Z" fill="#fdfdfd" stroke="#a9a9a9" stroke-width="0.55"/><path d="M16.4 0.3 V6.6 H22.5" fill="#f3f3f3" stroke="#c2c2c2" stroke-width="0.45"/><g transform="translate(4.4 8.4)"><rect x="0" y="0" width="14.4" height="14.4" rx="1.7" fill="url(#g9)"/><path d="M6.4 4.9 L14.4 12 V13 H2.6 Z" fill="url(#g11)"/><path d="M0 10.4 L5 5.1 Q6.2 4 7.4 5.1 L9.4 7.1 L3.6 13 H0 Z" fill="url(#g10)"/><path d="M0 12.5 H14.4 V12.7 Q14.4 14.4 12.7 14.4 H1.7 Q0 14.4 0 12.7 Z" fill="#2ea6ea"/><circle cx="10.6" cy="2.9" r="1.35" fill="#f1f9ff"/></g></svg>
<div class="badge" style="left:570.6px;top:354.6px;width:17.6px;height:17.6px"></div>
<div class="lbl" style="left:593.6px;top:354.4px">IMG_20220704<br>_154805</div>
<svg style="left:749.8px;top:220.8px" width="91.2" height="121.6" viewBox="0 0 22.8 30.4"><defs><linearGradient id="g12" x1="0" y1="0.2" x2="1" y2="0.6"><stop offset="0" stop-color="#1b6acc"/><stop offset="0.55" stop-color="#2a64c8"/><stop offset="1" stop-color="#5649b6"/></linearGradient><linearGradient id="g13" x1="0" y1="1" x2="1" y2="0"><stop offset="0" stop-color="#3fb4f2"/><stop offset="1" stop-color="#74d2fb"/></linearGradient><linearGradient id="g14" x1="0" y1="0" x2="1" y2="1"><stop offset="0" stop-color="#3193e4"/><stop offset="1" stop-color="#2878d6"/></linearGradient></defs><path d="M0.3 0.3 H16.4 L22.5 6.6 V30 H0.3 Z" fill="#fdfdfd" stroke="#a9a9a9" stroke-width="0.55"/><path d="M16.4 0.3 V6.6 H22.5" fill="#f3f3f3" stroke="#c2c2c2" stroke-width="0.45"/><g transform="translate(4.4 8.4)"><rect x="0" y="0" width="14.4" height="14.4" rx="1.7" fill="url(#g12)"/><path d="M6.4 4.9 L14.4 12 V13 H2.6 Z" fill="url(#g14)"/><path d="M0 10.4 L5 5.1 Q6.2 4 7.4 5.1 L9.4 7.1 L3.6 13 H0 Z" fill="url(#g13)"/><path d="M0 12.5 H14.4 V12.7 Q14.4 14.4 12.7 14.4 H1.7 Q0 14.4 0 12.7 Z" fill="#2ea6ea"/><circle cx="10.6" cy="2.9" r="1.35" fill="#f1f9ff"/></g></svg>
<div class="badge" style="left:725.6px;top:354.6px;width:17.6px;height:17.6px"></div>
<div class="lbl" style="left:748.6px;top:354.4px">IMG_20220704<br>_154809</div>
<svg style="left:904.8px;top:220.8px" width="91.2" height="121.6" viewBox="0 0 22.8 30.4"><defs><linearGradient id="g15" x1="0" y1="0.2" x2="1" y2="0.6"><stop offset="0" stop-color="#1b6acc"/><stop offset="0.55" stop-color="#2a64c8"/><stop offset="1" stop-color="#5649b6"/></linearGradient><linearGradient id="g16" x1="0" y1="1" x2="1" y2="0"><stop offset="0" stop-color="#3fb4f2"/><stop offset="1" stop-color="#74d2fb"/></linearGradient><linearGradient id="g17" x1="0" y1="0" x2="1" y2="1"><stop offset="0" stop-color="#3193e4"/><stop offset="1" stop-color="#2878d6"/></linearGradient></defs><path d="M0.3 0.3 H16.4 L22.5 6.6 V30 H0.3 Z" fill="#fdfdfd" stroke="#a9a9a9" stroke-width="0.55"/><path d="M16.4 0.3 V6.6 H22.5" fill="#f3f3f3" stroke="#c2c2c2" stroke-width="0.45"/><g transform="translate(4.4 8.4)"><rect x="0" y="0" width="14.4" height="14.4" rx="1.7" fill="url(#g15)"/><path d="M6.4 4.9 L14.4 12 V13 H2.6 Z" fill="url(#g17)"/><path d="M0 10.4 L5 5.1 Q6.2 4 7.4 5.1 L9.4 7.1 L3.6 13 H0 Z" fill="url(#g16)"/><path d="M0 12.5 H14.4 V12.7 Q14.4 14.4 12.7 14.4 H1.7 Q0 14.4 0 12.7 Z" fill="#2ea6ea"/><circle cx="10.6" cy="2.9" r="1.35" fill="#f1f9ff"/></g></svg>
<div class="badge" style="left:880.6px;top:354.6px;width:17.6px;height:17.6px"></div>
<div class="lbl" style="left:903.6px;top:354.4px">IMG_20220704<br>_154812</div>
<svg style="left:1059.8px;top:220.8px" width="91.2" height="121.6" viewBox="0 0 22.8 30.4"><defs><linearGradient id="g18" x1="0" y1="0.2" x2="1" y2="0.6"><stop offset="0" stop-color="#1b6acc"/><stop offset="0.55" stop-color="#2a64c8"/><stop offset="1" stop-color="#5649b6"/></linearGradient><linearGradient id="g19" x1="0" y1="1" x2="1" y2="0"><stop offset="0" stop-color="#3fb4f2"/><stop offset="1" stop-color="#74d2fb"/></linearGradient><linearGradient id="g20" x1="0" y1="0" x2="1" y2="1"><stop offset="0" stop-color="#3193e4"/><stop offset="1" stop-color="#2878d6"/></linearGradient></defs><path d="M0.3 0.3 H16.4 L22.5 6.6 V30 H0.3 Z" fill="#fdfdfd" stroke="#a9a9a9" stroke-width="0.55"/><path d="M16.4 0.3 V6.6 H22.5" fill="#f3f3f3" stroke="#c2c2c2" stroke-width="0.45"/><g transform="translate(4.4 8.4)"><rect x="0" y="0" width="14.4" height="14.4" rx="1.7" fill="url(#g18)"/><path d="M6.4 4.9 L14.4 12 V13 H2.6 Z" fill="url(#g20)"/><path d="M0 10.4 L5 5.1 Q6.2 4 7.4 5.1 L9.4 7.1 L3.6 13 H0 Z" fill="url(#g19)"/><path d="M0 12.5 H14.4 V12.7 Q14.4 14.4 12.7 14.4 H1.7 Q0 14.4 0 12.7 Z" fill="#2ea6ea"/><circle cx="10.6" cy="2.9" r="1.35" fill="#f1f9ff"/></g></svg>
<div class="badge" style="left:1035.6px;top:354.6px;width:17.6px;height:17.6px"></div>
<div class="lbl" style="left:1058.6px;top:354.4px">IMG_20220704<br>_154819</div>
<svg style="left:1214.8px;top:220.8px" width="91.2" height="121.6" viewBox="0 0 22.8 30.4"><defs><linearGradient id="g21" x1="0" y1="0.2" x2="1" y2="0.6"><stop offset="0" stop-color="#1b6acc"/><stop offset="0.55" stop-color="#2a64c8"/><stop offset="1" stop-color="#5649b6"/></linearGradient><linearGradient id="g22" x1="0" y1="1" x2="1" y2="0"><stop offset="0" stop-color="#3fb4f2"/><stop offset="1" stop-color="#74d2fb"/></linearGradient><linearGradient id="g23" x1="0" y1="0" x2="1" y2="1"><stop offset="0" stop-color="#3193e4"/><stop offset="1" stop-color="#2878d6"/></linearGradient></defs><path d="M0.3 0.3 H16.4 L22.5 6.6 V30 H0.3 Z" fill="#fdfdfd" stroke="#a9a9a9" stroke-width="0.55"/><path d="M16.4 0.3 V6.6 H22.5" fill="#f3f3f3" stroke="#c2c2c2" stroke-width="0.45"/><g transform="translate(4.4 8.4)"><rect x="0" y="0" width="14.4" height="14.4" rx="1.7" fill="url(#g21)"/><path d="M6.4 4.9 L14.4 12 V13 H2.6 Z" fill="url(#g23)"/><path d="M0 10.4 L5 5.1 Q6.2 4 7.4 5.1 L9.4 7.1 L3.6 13 H0 Z" fill="url(#g22)"/><path d="M0 12.5 H14.4 V12.7 Q14.4 14.4 12.7 14.4 H1.7 Q0 14.4 0 12.7 Z" fill="#2ea6ea"/><circle cx="10.6" cy="2.9" r="1.35" fill="#f1f9ff"/></g></svg>
<div class="badge" style="left:1190.6px;top:354.6px;width:17.6px;height:17.6px"></div>
<div class="lbl" style="left:1213.6px;top:354.4px">IMG_20220704<br>_154827</div>
<svg style="left:1369.8px;top:220.8px" width="91.2" height="121.6" viewBox="0 0 22.8 30.4"><defs><linearGradient id="g24" x1="0" y1="0.2" x2="1" y2="0.6"><stop offset="0" stop-color="#1b6acc"/><stop offset="0.55" stop-color="#2a64c8"/><stop offset="1" stop-color="#5649b6"/></linearGradient><linearGradient id="g25" x1="0" y1="1" x2="1" y2="0"><stop offset="0" stop-color="#3fb4f2"/><stop offset="1" stop-color="#74d2fb"/></linearGradient><linearGradient id="g26" x1="0" y1="0" x2="1" y2="1"><stop offset="0" stop-color="#3193e4"/><stop offset="1" stop-color="#2878d6"/></linearGradient></defs><path d="M0.3 0.3 H16.4 L22.5 6.6 V30 H0.3 Z" fill="#fdfdfd" stroke="#a9a9a9" stroke-width="0.55"/><path d="M16.4 0.3 V6.6 H22.5" fill="#f3f3f3" stroke="#c2c2c2" stroke-width="0.45"/><g transform="translate(4.4 8.4)"><rect x="0" y="0" width="14.4" height="14.4" rx="1.7" fill="url(#g24)"/><path d="M6.4 4.9 L14.4 12 V13 H2.6 Z" fill="url(#g26)"/><path d="M0 10.4 L5 5.1 Q6.2 4 7.4 5.1 L9.4 7.1 L3.6 13 H0 Z" fill="url(#g25)"/><path d="M0 12.5 H14.4 V12.7 Q14.4 14.4 12.7 14.4 H1.7 Q0 14.4 0 12.7 Z" fill="#2ea6ea"/><circle cx="10.6" cy="2.9" r="1.35" fill="#f1f9ff"/></g></svg>
<div class="badge" style="left:1345.6px;top:354.6px;width:17.6px;height:17.6px"></div>
<div class="lbl" style="left:1368.6px;top:354.4px">IMG_20220704<br>_154832</div>
<svg style="left:1524.8px;top:220.8px" width="91.2" height="121.6" viewBox="0 0 22.8 30.4"><defs><linearGradient id="g27" x1="0" y1="0.2" x2="1" y2="0.6"><stop offset="0" stop-color="#1b6acc"/><stop offset="0.55" stop-color="#2a64c8"/><stop offset="1" stop-color="#5649b6"/></linearGradient><linearGradient id="g28" x1="0" y1="1" x2="1" y2="0"><stop offset="0" stop-color="#3fb4f2"/><stop offset="1" stop-color="#74d2fb"/></linearGradient><linearGradient id="g29" x1="0" y1="0" x2="1" y2="1"><stop offset="0" stop-color="#3193e4"/><stop offset="1" stop-color="#2878d6"/></linearGradient></defs><path d="M0.3 0.3 H16.4 L22.5 6.6 V30 H0.3 Z" fill="#fdfdfd" stroke="#a9a9a9" stroke-width="0.55"/><path d="M16.4 0.3 V6.6 H22.5" fill="#f3f3f3" stroke="#c2c2c2" stroke-width="0.45"/><g transform="translate(4.4 8.4)"><rect x="0" y="0" width="14.4" height="14.4" rx="1.7" fill="url(#g27)"/><path d="M6.4 4.9 L14.4 12 V13 H2.6 Z" fill="url(#g29)"/><path d="M0 10.4 L5 5.1 Q6.2 4 7.4 5.1 L9.4 7.1 L3.6 13 H0 Z" fill="url(#g28)"/><path d="M0 12.5 H14.4 V12.7 Q14.4 14.4 12.7 14.4 H1.7 Q0 14.4 0 12.7 Z" fill="#2ea6ea"/><circle cx="10.6" cy="2.9" r="1.35" fill="#f1f9ff"/></g></svg>
<div class="badge" style="left:1500.6px;top:354.6px;width:17.6px;height:17.6px"></div>
<div class="lbl" style="left:1523.6px;top:354.4px">IMG_20220704<br>_154836</div>
<svg style="left:1679.8px;top:220.8px" width="91.2" height="121.6" viewBox="0 0 22.8 30.4"><defs><linearGradient id="g30" x1="0" y1="0.2" x2="1" y2="0.6"><stop offset="0" stop-color="#1b6acc"/><stop offset="0.55" stop-color="#2a64c8"/><stop offset="1" stop-color="#5649b6"/></linearGradient><linearGradient id="g31" x1="0" y1="1" x2="1" y2="0"><stop offset="0" stop-color="#3fb4f2"/><stop offset="1" stop-color="#74d2fb"/></linearGradient><linearGradient id="g32" x1="0" y1="0" x2="1" y2="1"><stop offset="0" stop-color="#3193e4"/><stop offset="1" stop-color="#2878d6"/></linearGradient></defs><path d="M0.3 0.3 H16.4 L22.5 6.6 V30 H0.3 Z" fill="#fdfdfd" stroke="#a9a9a9" stroke-width="0.55"/><path d="M16.4 0.3 V6.6 H22.5" fill="#f3f3f3" stroke="#c2c2c2" stroke-width="0.45"/><g transform="translate(4.4 8.4)"><rect x="0" y="0" width="14.4" height="14.4" rx="1.7" fill="url(#g30)"/><path d="M6.4 4.9 L14.4 12 V13 H2.6 Z" fill="url(#g32)"/><path d="M0 10.4 L5 5.1 Q6.2 4 7.4 5.1 L9.4 7.1 L3.6 13 H0 Z" fill="url(#g31)"/><path d="M0 12.5 H14.4 V12.7 Q14.4 14.4 12.7 14.4 H1.7 Q0 14.4 0 12.7 Z" fill="#2ea6ea"/><circle cx="10.6" cy="2.9" r="1.35" fill="#f1f9ff"/></g></svg>
<div class="badge" style="left:1655.6px;top:354.6px;width:17.6px;height:17.6px"></div>
<div class="lbl" style="left:1678.6px;top:354.4px">IMG_20220704<br>_154840</div>
<svg style="left:1834.8px;top:220.8px" width="91.2" height="121.6" viewBox="0 0 22.8 30.4"><defs><linearGradient id="g33" x1="0" y1="0.2" x2="1" y2="0.6"><stop offset="0" stop-color="#1b6acc"/><stop offset="0.55" stop-color="#2a64c8"/><stop offset="1" stop-color="#5649b6"/></linearGradient><linearGradient id="g34" x1="0" y1="1" x2="1" y2="0"><stop offset="0" stop-color="#3fb4f2"/><stop offset="1" stop-color="#74d2fb"/></linearGradient><linearGradient id="g35" x1="0" y1="0" x2="1" y2="1"><stop offset="0" stop-color="#3193e4"/><stop offset="1" stop-color="#2878d6"/></linearGradient></defs><path d="M0.3 0.3 H16.4 L22.5 6.6 V30 H0.3 Z" fill="#fdfdfd" stroke="#a9a9a9" stroke-width="0.55"/><path d="M16.4 0.3 V6.6 H22.5" fill="#f3f3f3" stroke="#c2c2c2" stroke-width="0.45"/><g transform="translate(4.4 8.4)"><rect x="0" y="0" width="14.4" height="14.4" rx="1.7" fill="url(#g33)"/><path d="M6.4 4.9 L14.4 12 V13 H2.6 Z" fill="url(#g35)"/><path d="M0 10.4 L5 5.1 Q6.2 4 7.4 5.1 L9.4 7.1 L3.6 13 H0 Z" fill="url(#g34)"/><path d="M0 12.5 H14.4 V12.7 Q14.4 14.4 12.7 14.4 H1.7 Q0 14.4 0 12.7 Z" fill="#2ea6ea"/><circle cx="10.6" cy="2.9" r="1.35" fill="#f1f9ff"/></g></svg>
<div class="badge" style="left:1810.6px;top:354.6px;width:17.6px;height:17.6px"></div>
<div class="lbl" style="left:1833.6px;top:354.4px">IMG_20220704<br>_154843</div>
<svg style="left:1989.8px;top:220.8px" width="91.2" height="121.6" viewBox="0 0 22.8 30.4"><defs><linearGradient id="g36" x1="0" y1="0.2" x2="1" y2="0.6"><stop offset="0" stop-color="#1b6acc"/><stop offset="0.55" stop-color="#2a64c8"/><stop offset="1" stop-color="#5649b6"/></linearGradient><linearGradient id="g37" x1="0" y1="1" x2="1" y2="0"><stop offset="0" stop-color="#3fb4f2"/><stop offset="1" stop-color="#74d2fb"/></linearGradient><linearGradient id="g38" x1="0" y1="0" x2="1" y2="1"><stop offset="0" stop-color="#3193e4"/><stop offset="1" stop-color="#2878d6"/></linearGradient></defs><path d="M0.3 0.3 H16.4 L22.5 6.6 V30 H0.3 Z" fill="#fdfdfd" stroke="#a9a9a9" stroke-width="0.55"/><path d="M16.4 0.3 V6.6 H22.5" fill="#f3f3f3" stroke="#c2c2c2" stroke-width="0.45"/><g transform="translate(4.4 8.4)"><rect x="0" y="0" width="14.4" height="14.4" rx="1.7" fill="url(#g36)"/><path d="M6.4 4.9 L14.4 12 V13 H2.6 Z" fill="url(#g38)"/><path d="M0 10.4 L5 5.1 Q6.2 4 7.4 5.1 L9.4 7.1 L3.6 13 H0 Z" fill="url(#g37)"/><path d="M0 12.5 H14.4 V12.7 Q14.4 14.4 12.7 14.4 H1.7 Q0 14.4 0 12.7 Z" fill="#2ea6ea"/><circle cx="10.6" cy="2.9" r="1.35" fill="#f1f9ff"/></g></svg>
<div class="badge" style="left:1965.6px;top:354.6px;width:17.6px;height:17.6px"></div>
<div class="lbl" style="left:1988.6px;top:354.4px">IMG_20220704<br>_154847</div>
<svg style="left:2144.8px;top:220.8px" width="91.2" height="121.6" viewBox="0 0 22.8 30.4"><defs><linearGradient id="g39" x1="0" y1="0.2" x2="1" y2="0.6"><stop offset="0" stop-color="#1b6acc"/><stop offset="0.55" stop-color="#2a64c8"/><stop offset="1" stop-color="#5649b6"/></linearGradient><linearGradient id="g40" x1="0" y1="1" x2="1" y2="0"><stop offset="0" stop-color="#3fb4f2"/><stop offset="1" stop-color="#74d2fb"/></linearGradient><linearGradient id="g41" x1="0" y1="0" x2="1" y2="1"><stop offset="0" stop-color="#3193e4"/><stop offset="1" stop-color="#2878d6"/></linearGradient></defs><path d="M0.3 0.3 H16.4 L22.5 6.6 V30 H0.3 Z" fill="#fdfdfd" stroke="#a9a9a9" stroke-width="0.55"/><path d="M16.4 0.3 V6.6 H22.5" fill="#f3f3f3" stroke="#c2c2c2" stroke-width="0.45"/><g transform="translate(4.4 8.4)"><rect x="0" y="0" width="14.4" height="14.4" rx="1.7" fill="url(#g39)"/><path d="M6.4 4.9 L14.4 12 V13 H2.6 Z" fill="url(#g41)"/><path d="M0 10.4 L5 5.1 Q6.2 4 7.4 5.1 L9.4 7.1 L3.6 13 H0 Z" fill="url(#g40)"/><path d="M0 12.5 H14.4 V12.7 Q14.4 14.4 12.7 14.4 H1.7 Q0 14.4 0 12.7 Z" fill="#2ea6ea"/><circle cx="10.6" cy="2.9" r="1.35" fill="#f1f9ff"/></g></svg>
<div class="badge" style="left:2120.6px;top:354.6px;width:17.6px;height:17.6px"></div>
<div class="lbl" style="left:2143.6px;top:354.4px">IMG_20220704<br>_154850</div>
<svg style="left:2299.8px;top:220.8px" width="91.2" height="121.6" viewBox="0 0 22.8 30.4"><defs><linearGradient id="g42" x1="0" y1="0.2" x2="1" y2="0.6"><stop offset="0" stop-color="#1b6acc"/><stop offset="0.55" stop-color="#2a64c8"/><stop offset="1" stop-color="#5649b6"/></linearGradient><linearGradient id="g43" x1="0" y1="1" x2="1" y2="0"><stop offset="0" stop-color="#3fb4f2"/><stop offset="1" stop-color="#74d2fb"/></linearGradient><linearGradient id="g44" x1="0" y1="0" x2="1" y2="1"><stop offset="0" stop-color="#3193e4"/><stop offset="1" stop-color="#2878d6"/></linearGradient></defs><path d="M0.3 0.3 H16.4 L22.5 6.6 V30 H0.3 Z" fill="#fdfdfd" stroke="#a9a9a9" stroke-width="0.55"/><path d="M16.4 0.3 V6.6 H22.5" fill="#f3f3f3" stroke="#c2c2c2" stroke-width="0.45"/><g transform="translate(4.4 8.4)"><rect x="0" y="0" width="14.4" height="14.4" rx="1.7" fill="url(#g42)"/><path d="M6.4 4.9 L14.4 12 V13 H2.6 Z" fill="url(#g44)"/><path d="M0 10.4 L5 5.1 Q6.2 4 7.4 5.1 L9.4 7.1 L3.6 13 H0 Z" fill="url(#g43)"/><path d="M0 12.5 H14.4 V12.7 Q14.4 14.4 12.7 14.4 H1.7 Q0 14.4 0 12.7 Z" fill="#2ea6ea"/><circle cx="10.6" cy="2.9" r="1.35" fill="#f1f9ff"/></g></svg>
<div class="badge" style="left:2275.6px;top:354.6px;width:17.6px;height:17.6px"></div>
<div class="lbl" style="left:2298.6px;top:354.4px">IMG_20220704<br>_154852</div>
<svg style="left:2454.8px;top:220.8px" width="91.2" height="121.6" viewBox="0 0 22.8 30.4"><defs><linearGradient id="g45" x1="0" y1="0.2" x2="1" y2="0.6"><stop offset="0" stop-color="#1b6acc"/><stop offset="0.55" stop-color="#2a64c8"/><stop offset="1" stop-color="#5649b6"/></linearGradient><linearGradient id="g46" x1="0" y1="1" x2="1" y2="0"><stop offset="0" stop-color="#3fb4f2"/><stop offset="1" stop-color="#74d2fb"/></linearGradient><linearGradient id="g47" x1="0" y1="0" x2="1" y2="1"><stop offset="0" stop-color="#3193e4"/><stop offset="1" stop-color="#2878d6"/></linearGradient></defs><path d="M0.3 0.3 H16.4 L22.5 6.6 V30 H0.3 Z" fill="#fdfdfd" stroke="#a9a9a9" stroke-width="0.55"/><path d="M16.4 0.3 V6.6 H22.5" fill="#f3f3f3" stroke="#c2c2c2" stroke-width="0.45"/><g transform="translate(4.4 8.4)"><rect x="0" y="0" width="14.4" height="14.4" rx="1.7" fill="url(#g45)"/><path d="M6.4 4.9 L14.4 12 V13 H2.6 Z" fill="url(#g47)"/><path d="M0 10.4 L5 5.1 Q6.2 4 7.4 5.1 L9.4 7.1 L3.6 13 H0 Z" fill="url(#g46)"/><path d="M0 12.5 H14.4 V12.7 Q14.4 14.4 12.7 14.4 H1.7 Q0 14.4 0 12.7 Z" fill="#2ea6ea"/><circle cx="10.6" cy="2.9" r="1.35" fill="#f1f9ff"/></g></svg>
<div class="badge" style="left:2430.6px;top:354.6px;width:17.6px;height:17.6px"></div>
<div class="lbl" style="left:2453.6px;top:354.4px">IMG_20220704<br>_154855</div>
<svg style="left:2609.8px;top:220.8px" width="91.2" height="121.6" viewBox="0 0 22.8 30.4"><defs><linearGradient id="g48" x1="0" y1="0.2" x2="1" y2="0.6"><stop offset="0" stop-color="#1b6acc"/><stop offset="0.55" stop-color="#2a64c8"/><stop offset="1" stop-color="#5649b6"/></linearGradient><linearGradient id="g49" x1="0" y1="1" x2="1" y2="0"><stop offset="0" stop-color="#3fb4f2"/><stop offset="1" stop-color="#74d2fb"/></linearGradient><linearGradient id="g50" x1="0" y1="0" x2="1" y2="1"><stop offset="0" stop-color="#3193e4"/><stop offset="1" stop-color="#2878d6"/></linearGradient></defs><path d="M0.3 0.3 H16.4 L22.5 6.6 V30 H0.3 Z" fill="#fdfdfd" stroke="#a9a9a9" stroke-width="0.55"/><path d="M16.4 0.3 V6.6 H22.5" fill="#f3f3f3" stroke="#c2c2c2" stroke-width="0.45"/><g transform="translate(4.4 8.4)"><rect x="0" y="0" width="14.4" height="14.4" rx="1.7" fill="url(#g48)"/><path d="M6.4 4.9 L14.4 12 V13 H2.6 Z" fill="url(#g50)"/><path d="M0 10.4 L5 5.1 Q6.2 4 7.4 5.1 L9.4 7.1 L3.6 13 H0 Z" fill="url(#g49)"/><path d="M0 12.5 H14.4 V12.7 Q14.4 14.4 12.7 14.4 H1.7 Q0 14.4 0 12.7 Z" fill="#2ea6ea"/><circle cx="10.6" cy="2.9" r="1.35" fill="#f1f9ff"/></g></svg>
<div class="badge" style="left:2585.6px;top:354.6px;width:17.6px;height:17.6px"></div>
<div class="lbl" style="left:2608.6px;top:354.4px">IMG_20220704<br>_154904</div>
<svg style="left:2764.8px;top:220.8px" width="91.2" height="121.6" viewBox="0 0 22.8 30.4"><defs><linearGradient id="g51" x1="0" y1="0.2" x2="1" y2="0.6"><stop offset="0" stop-color="#1b6acc"/><stop offset="0.55" stop-color="#2a64c8"/><stop offset="1" stop-color="#5649b6"/></linearGradient><linearGradient id="g52" x1="0" y1="1" x2="1" y2="0"><stop offset="0" stop-color="#3fb4f2"/><stop offset="1" stop-color="#74d2fb"/></linearGradient><linearGradient id="g53" x1="0" y1="0" x2="1" y2="1"><stop offset="0" stop-color="#3193e4"/><stop offset="1" stop-color="#2878d6"/></linearGradient></defs><path d="M0.3 0.3 H16.4 L22.5 6.6 V30 H0.3 Z" fill="#fdfdfd" stroke="#a9a9a9" stroke-width="0.55"/><path d="M16.4 0.3 V6.6 H22.5" fill="#f3f3f3" stroke="#c2c2c2" stroke-width="0.45"/><g transform="translate(4.4 8.4)"><rect x="0" y="0" width="14.4" height="14.4" rx="1.7" fill="url(#g51)"/><path d="M6.4 4.9 L14.4 12 V13 H2.6 Z" fill="url(#g53)"/><path d="M0 10.4 L5 5.1 Q6.2 4 7.4 5.1 L9.4 7.1 L3.6 13 H0 Z" fill="url(#g52)"/><path d="M0 12.5 H14.4 V12.7 Q14.4 14.4 12.7 14.4 H1.7 Q0 14.4 0 12.7 Z" fill="#2ea6ea"/><circle cx="10.6" cy="2.9" r="1.35" fill="#f1f9ff"/></g></svg>
<div class="badge" style="left:2740.6px;top:354.6px;width:17.6px;height:17.6px"></div>
<div class="lbl" style="left:2763.6px;top:354.4px">IMG_20220704<br>_154907</div>
<svg style="left:2919.8px;top:220.8px" width="91.2" height="121.6" viewBox="0 0 22.8 30.4"><defs><linearGradient id="g54" x1="0" y1="0.2" x2="1" y2="0.6"><stop offset="0" stop-color="#1b6acc"/><stop offset="0.55" stop-color="#2a64c8"/><stop offset="1" stop-color="#5649b6"/></linearGradient><linearGradient id="g55" x1="0" y1="1" x2="1" y2="0"><stop offset="0" stop-color="#3fb4f2"/><stop offset="1" stop-color="#74d2fb"/></linearGradient><linearGradient id="g56" x1="0" y1="0" x2="1" y2="1"><stop offset="0" stop-color="#3193e4"/><stop offset="1" stop-color="#2878d6"/></linearGradient></defs><path d="M0.3 0.3 H16.4 L22.5 6.6 V30 H0.3 Z" fill="#fdfdfd" stroke="#a9a9a9" stroke-width="0.55"/><path d="M16.4 0.3 V6.6 H22.5" fill="#f3f3f3" stroke="#c2c2c2" stroke-width="0.45"/><g transform="translate(4.4 8.4)"><rect x="0" y="0" width="14.4" height="14.4" rx="1.7" fill="url(#g54)"/><path d="M6.4 4.9 L14.4 12 V13 H2.6 Z" fill="url(#g56)"/><path d="M0 10.4 L5 5.1 Q6.2 4 7.4 5.1 L9.4 7.1 L3.6 13 H0 Z" fill="url(#g55)"/><path d="M0 12.5 H14.4 V12.7 Q14.4 14.4 12.7 14.4 H1.7 Q0 14.4 0 12.7 Z" fill="#2ea6ea"/><circle cx="10.6" cy="2.9" r="1.35" fill="#f1f9ff"/></g></svg>
<div class="badge" style="left:2895.6px;top:354.6px;width:17.6px;height:17.6px"></div>
<div class="lbl" style="left:2918.6px;top:354.4px">IMG_20220704<br>_154913</div>
<svg style="left:3074.8px;top:220.8px" width="91.2" height="121.6" viewBox="0 0 22.8 30.4"><defs><linearGradient id="g57" x1="0" y1="0.2" x2="1" y2="0.6"><stop offset="0" stop-color="#1b6acc"/><stop offset="0.55" stop-color="#2a64c8"/><stop offset="1" stop-color="#5649b6"/></linearGradient><linearGradient id="g58" x1="0" y1="1" x2="1" y2="0"><stop offset="0" stop-color="#3fb4f2"/><stop offset="1" stop-color="#74d2fb"/></linearGradient><linearGradient id="g59" x1="0" y1="0" x2="1" y2="1"><stop offset="0" stop-color="#3193e4"/><stop offset="1" stop-color="#2878d6"/></linearGradient></defs><path d="M0.3 0.3 H16.4 L22.5 6.6 V30 H0.3 Z" fill="#fdfdfd" stroke="#a9a9a9" stroke-width="0.55"/><path d="M16.4 0.3 V6.6 H22.5" fill="#f3f3f3" stroke="#c2c2c2" stroke-width="0.45"/><g transform="translate(4.4 8.4)"><rect x="0" y="0" width="14.4" height="14.4" rx="1.7" fill="url(#g57)"/><path d="M6.4 4.9 L14.4 12 V13 H2.6 Z" fill="url(#g59)"/><path d="M0 10.4 L5 5.1 Q6.2 4 7.4 5.1 L9.4 7.1 L3.6 13 H0 Z" fill="url(#g58)"/><path d="M0 12.5 H14.4 V12.7 Q14.4 14.4 12.7 14.4 H1.7 Q0 14.4 0 12.7 Z" fill="#2ea6ea"/><circle cx="10.6" cy="2.9" r="1.35" fill="#f1f9ff"/></g></svg>
<div class="badge" style="left:3050.6px;top:354.6px;width:17.6px;height:17.6px"></div>
<div class="lbl" style="left:3073.6px;top:354.4px">IMG_20220704<br>_154915</div>
<svg style="left:284.8px;top:421.6px" width="91.2" height="121.6" viewBox="0 0 22.8 30.4"><defs><linearGradient id="g60" x1="0" y1="0.2" x2="1" y2="0.6"><stop offset="0" stop-color="#1b6acc"/><stop offset="0.55" stop-color="#2a64c8"/><stop offset="1" stop-color="#5649b6"/></linearGradient><linearGradient id="g61" x1="0" y1="1" x2="1" y2="0"><stop offset="0" stop-color="#3fb4f2"/><stop offset="1" stop-color="#74d2fb"/></linearGradient><linearGradient id="g62" x1="0" y1="0" x2="1" y2="1"><stop offset="0" stop-color="#3193e4"/><stop offset="1" stop-color="#2878d6"/></linearGradient></defs><path d="M0.3 0.3 H16.4 L22.5 6.6 V30 H0.3 Z" fill="#fdfdfd" stroke="#a9a9a9" stroke-width="0.55"/><path d="M16.4 0.3 V6.6 H22.5" fill="#f3f3f3" stroke="#c2c2c2" stroke-width="0.45"/><g transform="translate(4.4 8.4)"><rect x="0" y="0" width="14.4" height="14.4" rx="1.7" fill="url(#g60)"/><path d="M6.4 4.9 L14.4 12 V13 H2.6 Z" fill="url(#g62)"/><path d="M0 10.4 L5 5.1 Q6.2 4 7.4 5.1 L9.4 7.1 L3.6 13 H0 Z" fill="url(#g61)"/><path d="M0 12.5 H14.4 V12.7 Q14.4 14.4 12.7 14.4 H1.7 Q0 14.4 0 12.7 Z" fill="#2ea6ea"/><circle cx="10.6" cy="2.9" r="1.35" fill="#f1f9ff"/></g></svg>
<div class="badge" style="left:260.6px;top:555.4px;width:17.6px;height:17.6px"></div>
<div class="lbl" style="left:283.6px;top:555.2px">IMG_20220704<br>_154919</div>
<svg style="left:439.8px;top:421.6px" width="91.2" height="121.6" viewBox="0 0 22.8 30.4"><defs><linearGradient id="g63" x1="0" y1="0.2" x2="1" y2="0.6"><stop offset="0" stop-color="#1b6acc"/><stop offset="0.55" stop-color="#2a64c8"/><stop offset="1" stop-color="#5649b6"/></linearGradient><linearGradient id="g64" x1="0" y1="1" x2="1" y2="0"><stop offset="0" stop-color="#3fb4f2"/><stop offset="1" stop-color="#74d2fb"/></linearGradient><linearGradient id="g65" x1="0" y1="0" x2="1" y2="1"><stop offset="0" stop-color="#3193e4"/><stop offset="1" stop-color="#2878d6"/></linearGradient></defs><path d="M0.3 0.3 H16.4 L22.5 6.6 V30 H0.3 Z" fill="#fdfdfd" stroke="#a9a9a9" stroke-width="0.55"/><path d="M16.4 0.3 V6.6 H22.5" fill="#f3f3f3" stroke="#c2c2c2" stroke-width="0.45"/><g transform="translate(4.4 8.4)"><rect x="0" y="0" width="14.4" height="14.4" rx="1.7" fill="url(#g63)"/><path d="M6.4 4.9 L14.4 12 V13 H2.6 Z" fill="url(#g65)"/><path d="M0 10.4 L5 5.1 Q6.2 4 7.4 5.1 L9.4 7.1 L3.6 13 H0 Z" fill="url(#g64)"/><path d="M0 12.5 H14.4 V12.7 Q14.4 14.4 12.7 14.4 H1.7 Q0 14.4 0 12.7 Z" fill="#2ea6ea"/><circle cx="10.6" cy="2.9" r="1.35" fill="#f1f9ff"/></g></svg>
<div class="badge" style="left:415.6px;top:555.4px;width:17.6px;height:17.6px"></div>
<div class="lbl" style="left:438.6px;top:555.2px">IMG_20220704<br>_154921</div>
<svg style="left:594.8px;top:421.6px" width="91.2" height="121.6" viewBox="0 0 22.8 30.4"><defs><linearGradient id="g66" x1="0" y1="0.2" x2="1" y2="0.6"><stop offset="0" stop-color="#1b6acc"/><stop offset="0.55" stop-color="#2a64c8"/><stop offset="1" stop-color="#5649b6"/></linearGradient><linearGradient id="g67" x1="0" y1="1" x2="1" y2="0"><stop offset="0" stop-color="#3fb4f2"/><stop offset="1" stop-color="#74d2fb"/></linearGradient><linearGradient id="g68" x1="0" y1="0" x2="1" y2="1"><stop offset="0" stop-color="#3193e4"/><stop offset="1" stop-color="#2878d6"/></linearGradient></defs><path d="M0.3 0.3 H16.4 L22.5 6.6 V30 H0.3 Z" fill="#fdfdfd" stroke="#a9a9a9" stroke-width="0.55"/><path d="M16.4 0.3 V6.6 H22.5" fill="#f3f3f3" stroke="#c2c2c2" stroke-width="0.45"/><g transform="translate(4.4 8.4)"><rect x="0" y="0" width="14.4" height="14.4" rx="1.7" fill="url(#g66)"/><path d="M6.4 4.9 L14.4 12 V13 H2.6 Z" fill="url(#g68)"/><path d="M0 10.4 L5 5.1 Q6.2 4 7.4 5.1 L9.4 7.1 L3.6 13 H0 Z" fill="url(#g67)"/><path d="M0 12.5 H14.4 V12.7 Q14.4 14.4 12.7 14.4 H1.7 Q0 14.4 0 12.7 Z" fill="#2ea6ea"/><circle cx="10.6" cy="2.9" r="1.35" fill="#f1f9ff"/></g></svg>
<div class="badge" style="left:570.6px;top:555.4px;width:17.6px;height:17.6px"></div>
<div class="lbl" style="left:593.6px;top:555.2px">IMG_20220704<br>_154925</div>
<svg style="left:749.8px;top:421.6px" width="91.2" height="121.6" viewBox="0 0 22.8 30.4"><defs><linearGradient id="g69" x1="0" y1="0.2" x2="1" y2="0.6"><stop offset="0" stop-color="#1b6acc"/><stop offset="0.55" stop-color="#2a64c8"/><stop offset="1" stop-color="#5649b6"/></linearGradient><linearGradient id="g70" x1="0" y1="1" x2="1" y2="0"><stop offset="0" stop-color="#3fb4f2"/><stop offset="1" stop-color="#74d2fb"/></linearGradient><linearGradient id="g71" x1="0" y1="0" x2="1" y2="1"><stop offset="0" stop-color="#3193e4"/><stop offset="1" stop-color="#2878d6"/></linearGradient></defs><path d="M0.3 0.3 H16.4 L22.5 6.6 V30 H0.3 Z" fill="#fdfdfd" stroke="#a9a9a9" stroke-width="0.55"/><path d="M16.4 0.3 V6.6 H22.5" fill="#f3f3f3" stroke="#c2c2c2" stroke-width="0.45"/><g transform="translate(4.4 8.4)"><rect x="0" y="0" width="14.4" height="14.4" rx="1.7" fill="url(#g69)"/><path d="M6.4 4.9 L14.4 12 V13 H2.6 Z" fill="url(#g71)"/><path d="M0 10.4 L5 5.1 Q6.2 4 7.4 5.1 L9.4 7.1 L3.6 13 H0 Z" fill="url(#g70)"/><path d="M0 12.5 H14.4 V12.7 Q14.4 14.4 12.7 14.4 H1.7 Q0 14.4 0 12.7 Z" fill="#2ea6ea"/><circle cx="10.6" cy="2.9" r="1.35" fill="#f1f9ff"/></g></svg>
<div class="badge" style="left:725.6px;top:555.4px;width:17.6px;height:17.6px"></div>
<div class="lbl" style="left:748.6px;top:555.2px">IMG_20220704<br>_154928</div>
<svg style="left:904.8px;top:421.6px" width="91.2" height="121.6" viewBox="0 0 22.8 30.4"><defs><linearGradient id="g72" x1="0" y1="0.2" x2="1" y2="0.6"><stop offset="0" stop-color="#1b6acc"/><stop offset="0.55" stop-color="#2a64c8"/><stop offset="1" stop-color="#5649b6"/></linearGradient><linearGradient id="g73" x1="0" y1="1" x2="1" y2="0"><stop offset="0" stop-color="#3fb4f2"/><stop offset="1" stop-color="#74d2fb"/></linearGradient><linearGradient id="g74" x1="0" y1="0" x2="1" y2="1"><stop offset="0" stop-color="#3193e4"/><stop offset="1" stop-color="#2878d6"/></linearGradient></defs><path d="M0.3 0.3 H16.4 L22.5 6.6 V30 H0.3 Z" fill="#fdfdfd" stroke="#a9a9a9" stroke-width="0.55"/><path d="M16.4 0.3 V6.6 H22.5" fill="#f3f3f3" stroke="#c2c2c2" stroke-width="0.45"/><g transform="translate(4.4 8.4)"><rect x="0" y="0" width="14.4" height="14.4" rx="1.7" fill="url(#g72)"/><path d="M6.4 4.9 L14.4 12 V13 H2.6 Z" fill="url(#g74)"/><path d="M0 10.4 L5 5.1 Q6.2 4 7.4 5.1 L9.4 7.1 L3.6 13 H0 Z" fill="url(#g73)"/><path d="M0 12.5 H14.4 V12.7 Q14.4 14.4 12.7 14.4 H1.7 Q0 14.4 0 12.7 Z" fill="#2ea6ea"/><circle cx="10.6" cy="2.9" r="1.35" fill="#f1f9ff"/></g></svg>
<div class="badge" style="left:880.6px;top:555.4px;width:17.6px;height:17.6px"></div>
<div class="lbl" style="left:903.6px;top:555.2px">IMG_20220704<br>_154935</div>
<svg style="left:1059.8px;top:421.6px" width="91.2" height="121.6" viewBox="0 0 22.8 30.4"><defs><linearGradient id="g75" x1="0" y1="0.2" x2="1" y2="0.6"><stop offset="0" stop-color="#1b6acc"/><stop offset="0.55" stop-color="#2a64c8"/><stop offset="1" stop-color="#5649b6"/></linearGradient><linearGradient id="g76" x1="0" y1="1" x2="1" y2="0"><stop offset="0" stop-color="#3fb4f2"/><stop offset="1" stop-color="#74d2fb"/></linearGradient><linearGradient id="g77" x1="0" y1="0" x2="1" y2="1"><stop offset="0" stop-color="#3193e4"/><stop offset="1" stop-color="#2878d6"/></linearGradient></defs><path d="M0.3 0.3 H16.4 L22.5 6.6 V30 H0.3 Z" fill="#fdfdfd" stroke="#a9a9a9" stroke-width="0.55"/><path d="M16.4 0.3 V6.6 H22.5" fill="#f3f3f3" stroke="#c2c2c2" stroke-width="0.45"/><g transform="translate(4.4 8.4)"><rect x="0" y="0" width="14.4" height="14.4" rx="1.7" fill="url(#g75)"/><path d="M6.4 4.9 L14.4 12 V13 H2.6 Z" fill="url(#g77)"/><path d="M0 10.4 L5 5.1 Q6.2 4 7.4 5.1 L9.4 7.1 L3.6 13 H0 Z" fill="url(#g76)"/><path d="M0 12.5 H14.4 V12.7 Q14.4 14.4 12.7 14.4 H1.7 Q0 14.4 0 12.7 Z" fill="#2ea6ea"/><circle cx="10.6" cy="2.9" r="1.35" fill="#f1f9ff"/></g></svg>
<div class="badge" style="left:1035.6px;top:555.4px;width:17.6px;height:17.6px"></div>
<div class="lbl" style="left:1058.6px;top:555.2px">IMG_20220704<br>_154943</div>
<svg style="left:1214.8px;top:421.6px" width="91.2" height="121.6" viewBox="0 0 22.8 30.4"><defs><linearGradient id="g78" x1="0" y1="0.2" x2="1" y2="0.6"><stop offset="0" stop-color="#1b6acc"/><stop offset="0.55" stop-color="#2a64c8"/><stop offset="1" stop-color="#5649b6"/></linearGradient><linearGradient id="g79" x1="0" y1="1" x2="1" y2="0"><stop offset="0" stop-color="#3fb4f2"/><stop offset="1" stop-color="#74d2fb"/></linearGradient><linearGradient id="g80" x1="0" y1="0" x2="1" y2="1"><stop offset="0" stop-color="#3193e4"/><stop offset="1" stop-color="#2878d6"/></linearGradient></defs><path d="M0.3 0.3 H16.4 L22.5 6.6 V30 H0.3 Z" fill="#fdfdfd" stroke="#a9a9a9" stroke-width="0.55"/><path d="M16.4 0.3 V6.6 H22.5" fill="#f3f3f3" stroke="#c2c2c2" stroke-width="0.45"/><g transform="translate(4.4 8.4)"><rect x="0" y="0" width="14.4" height="14.4" rx="1.7" fill="url(#g78)"/><path d="M6.4 4.9 L14.4 12 V13 H2.6 Z" fill="url(#g80)"/><path d="M0 10.4 L5 5.1 Q6.2 4 7.4 5.1 L9.4 7.1 L3.6 13 H0 Z" fill="url(#g79)"/><path d="M0 12.5 H14.4 V12.7 Q14.4 14.4 12.7 14.4 H1.7 Q0 14.4 0 12.7 Z" fill="#2ea6ea"/><circle cx="10.6" cy="2.9" r="1.35" fill="#f1f9ff"/></g></svg>
<div class="badge" style="left:1190.6px;top:555.4px;width:17.6px;height:17.6px"></div>
<div class="lbl" style="left:1213.6px;top:555.2px">IMG_20220704<br>_154945</div>
<svg style="left:1369.8px;top:421.6px" width="91.2" height="121.6" viewBox="0 0 22.8 30.4"><defs><linearGradient id="g81" x1="0" y1="0.2" x2="1" y2="0.6"><stop offset="0" stop-color="#1b6acc"/><stop offset="0.55" stop-color="#2a64c8"/><stop offset="1" stop-color="#5649b6"/></linearGradient><linearGradient id="g82" x1="0" y1="1" x2="1" y2="0"><stop offset="0" stop-color="#3fb4f2"/><stop offset="1" stop-color="#74d2fb"/></linearGradient><linearGradient id="g83" x1="0" y1="0" x2="1" y2="1"><stop offset="0" stop-color="#3193e4"/><stop offset="1" stop-color="#2878d6"/></linearGradient></defs><path d="M0.3 0.3 H16.4 L22.5 6.6 V30 H0.3 Z" fill="#fdfdfd" stroke="#a9a9a9" stroke-width="0.55"/><path d="M16.4 0.3 V6.6 H22.5" fill="#f3f3f3" stroke="#c2c2c2" stroke-width="0.45"/><g transform="translate(4.4 8.4)"><rect x="0" y="0" width="14.4" height="14.4" rx="1.7" fill="url(#g81)"/><path d="M6.4 4.9 L14.4 12 V13 H2.6 Z" fill="url(#g83)"/><path d="M0 10.4 L5 5.1 Q6.2 4 7.4 5.1 L9.4 7.1 L3.6 13 H0 Z" fill="url(#g82)"/><path d="M0 12.5 H14.4 V12.7 Q14.4 14.4 12.7 14.4 H1.7 Q0 14.4 0 12.7 Z" fill="#2ea6ea"/><circle cx="10.6" cy="2.9" r="1.35" fill="#f1f9ff"/></g></svg>
<div class="badge" style="left:1345.6px;top:555.4px;width:17.6px;height:17.6px"></div>
<div class="lbl" style="left:1368.6px;top:555.2px">IMG_20220704<br>_154954</div>
<svg style="left:1524.8px;top:421.6px" width="91.2" height="121.6" viewBox="0 0 22.8 30.4"><defs><linearGradient id="g84" x1="0" y1="0.2" x2="1" y2="0.6"><stop offset="0" stop-color="#1b6acc"/><stop offset="0.55" stop-color="#2a64c8"/><stop offset="1" stop-color="#5649b6"/></linearGradient><linearGradient id="g85" x1="0" y1="1" x2="1" y2="0"><stop offset="0" stop-color="#3fb4f2"/><stop offset="1" stop-color="#74d2fb"/></linearGradient><linearGradient id="g86" x1="0" y1="0" x2="1" y2="1"><stop offset="0" stop-color="#3193e4"/><stop offset="1" stop-color="#2878d6"/></linearGradient></defs><path d="M0.3 0.3 H16.4 L22.5 6.6 V30 H0.3 Z" fill="#fdfdfd" stroke="#a9a9a9" stroke-width="0.55"/><path d="M16.4 0.3 V6.6 H22.5" fill="#f3f3f3" stroke="#c2c2c2" stroke-width="0.45"/><g transform="translate(4.4 8.4)"><rect x="0" y="0" width="14.4" height="14.4" rx="1.7" fill="url(#g84)"/><path d="M6.4 4.9 L14.4 12 V13 H2.6 Z" fill="url(#g86)"/><path d="M0 10.4 L5 5.1 Q6.2 4 7.4 5.1 L9.4 7.1 L3.6 13 H0 Z" fill="url(#g85)"/><path d="M0 12.5 H14.4 V12.7 Q14.4 14.4 12.7 14.4 H1.7 Q0 14.4 0 12.7 Z" fill="#2ea6ea"/><circle cx="10.6" cy="2.9" r="1.35" fill="#f1f9ff"/></g></svg>
<div class="badge" style="left:1500.6px;top:555.4px;width:17.6px;height:17.6px"></div>
<div class="lbl" style="left:1523.6px;top:555.2px">IMG_20220704<br>_154957</div>
<svg style="left:1679.8px;top:421.6px" width="91.2" height="121.6" viewBox="0 0 22.8 30.4"><defs><linearGradient id="g87" x1="0" y1="0.2" x2="1" y2="0.6"><stop offset="0" stop-color="#1b6acc"/><stop offset="0.55" stop-color="#2a64c8"/><stop offset="1" stop-color="#5649b6"/></linearGradient><linearGradient id="g88" x1="0" y1="1" x2="1" y2="0"><stop offset="0" stop-color="#3fb4f2"/><stop offset="1" stop-color="#74d2fb"/></linearGradient><linearGradient id="g89" x1="0" y1="0" x2="1" y2="1"><stop offset="0" stop-color="#3193e4"/><stop offset="1" stop-color="#2878d6"/></linearGradient></defs><path d="M0.3 0.3 H16.4 L22.5 6.6 V30 H0.3 Z" fill="#fdfdfd" stroke="#a9a9a9" stroke-width="0.55"/><path d="M16.4 0.3 V6.6 H22.5" fill="#f3f3f3" stroke="#c2c2c2" stroke-width="0.45"/><g transform="translate(4.4 8.4)"><rect x="0" y="0" width="14.4" height="14.4" rx="1.7" fill="url(#g87)"/><path d="M6.4 4.9 L14.4 12 V13 H2.6 Z" fill="url(#g89)"/><path d="M0 10.4 L5 5.1 Q6.2 4 7.4 5.1 L9.4 7.1 L3.6 13 H0 Z" fill="url(#g88)"/><path d="M0 12.5 H14.4 V12.7 Q14.4 14.4 12.7 14.4 H1.7 Q0 14.4 0 12.7 Z" fill="#2ea6ea"/><circle cx="10.6" cy="2.9" r="1.35" fill="#f1f9ff"/></g></svg>
<div class="badge" style="left:1655.6px;top:555.4px;width:17.6px;height:17.6px"></div>
<div class="lbl" style="left:1678.6px;top:555.2px">IMG_20220704<br>_155000</div>
<svg style="left:1834.8px;top:421.6px" width="91.2" height="121.6" viewBox="0 0 22.8 30.4"><defs><linearGradient id="g90" x1="0" y1="0.2" x2="1" y2="0.6"><stop offset="0" stop-color="#1b6acc"/><stop offset="0.55" stop-color="#2a64c8"/><stop offset="1" stop-color="#5649b6"/></linearGradient><linearGradient id="g91" x1="0" y1="1" x2="1" y2="0"><stop offset="0" stop-color="#3fb4f2"/><stop offset="1" stop-color="#74d2fb"/></linearGradient><linearGradient id="g92" x1="0" y1="0" x2="1" y2="1"><stop offset="0" stop-color="#3193e4"/><stop offset="1" stop-color="#2878d6"/></linearGradient></defs><path d="M0.3 0.3 H16.4 L22.5 6.6 V30 H0.3 Z" fill="#fdfdfd" stroke="#a9a9a9" stroke-width="0.55"/><path d="M16.4 0.3 V6.6 H22.5" fill="#f3f3f3" stroke="#c2c2c2" stroke-width="0.45"/><g transform="translate(4.4 8.4)"><rect x="0" y="0" width="14.4" height="14.4" rx="1.7" fill="url(#g90)"/><path d="M6.4 4.9 L14.4 12 V13 H2.6 Z" fill="url(#g92)"/><path d="M0 10.4 L5 5.1 Q6.2 4 7.4 5.1 L9.4 7.1 L3.6 13 H0 Z" fill="url(#g91)"/><path d="M0 12.5 H14.4 V12.7 Q14.4 14.4 12.7 14.4 H1.7 Q0 14.4 0 12.7 Z" fill="#2ea6ea"/><circle cx="10.6" cy="2.9" r="1.35" fill="#f1f9ff"/></g></svg>
<div class="badge" style="left:1810.6px;top:555.4px;width:17.6px;height:17.6px"></div>
<div class="lbl" style="left:1833.6px;top:555.2px">IMG_20220704<br>_155008</div>
<svg style="left:1989.8px;top:421.6px" width="91.2" height="121.6" viewBox="0 0 22.8 30.4"><defs><linearGradient id="g93" x1="0" y1="0.2" x2="1" y2="0.6"><stop offset="0" stop-color="#1b6acc"/><stop offset="0.55" stop-color="#2a64c8"/><stop offset="1" stop-color="#5649b6"/></linearGradient><linearGradient id="g94" x1="0" y1="1" x2="1" y2="0"><stop offset="0" stop-color="#3fb4f2"/><stop offset="1" stop-color="#74d2fb"/></linearGradient><linearGradient id="g95" x1="0" y1="0" x2="1" y2="1"><stop offset="0" stop-color="#3193e4"/><stop offset="1" stop-color="#2878d6"/></linearGradient></defs><path d="M0.3 0.3 H16.4 L22.5 6.6 V30 H0.3 Z" fill="#fdfdfd" stroke="#a9a9a9" stroke-width="0.55"/><path d="M16.4 0.3 V6.6 H22.5" fill="#f3f3f3" stroke="#c2c2c2" stroke-width="0.45"/><g transform="translate(4.4 8.4)"><rect x="0" y="0" width="14.4" height="14.4" rx="1.7" fill="url(#g93)"/><path d="M6.4 4.9 L14.4 12 V13 H2.6 Z" fill="url(#g95)"/><path d="M0 10.4 L5 5.1 Q6.2 4 7.4 5.1 L9.4 7.1 L3.6 13 H0 Z" fill="url(#g94)"/><path d="M0 12.5 H14.4 V12.7 Q14.4 14.4 12.7 14.4 H1.7 Q0 14.4 0 12.7 Z" fill="#2ea6ea"/><circle cx="10.6" cy="2.9" r="1.35" fill="#f1f9ff"/></g></svg>
<div class="badge" style="left:1965.6px;top:555.4px;width:17.6px;height:17.6px"></div>
<div class="lbl" style="left:1988.6px;top:555.2px">IMG_20220704<br>_160521</div>
<svg style="left:2144.8px;top:421.6px" width="91.2" height="121.6" viewBox="0 0 22.8 30.4"><defs><linearGradient id="g96" x1="0" y1="0.2" x2="1" y2="0.6"><stop offset="0" stop-color="#1b6acc"/><stop offset="0.55" stop-color="#2a64c8"/><stop offset="1" stop-color="#5649b6"/></linearGradient><linearGradient id="g97" x1="0" y1="1" x2="1" y2="0"><stop offset="0" stop-color="#3fb4f2"/><stop offset="1" stop-color="#74d2fb"/></linearGradient><linearGradient id="g98" x1="0" y1="0" x2="1" y2="1"><stop offset="0" stop-color="#3193e4"/><stop offset="1" stop-color="#2878d6"/></linearGradient></defs><path d="M0.3 0.3 H16.4 L22.5 6.6 V30 H0.3 Z" fill="#fdfdfd" stroke="#a9a9a9" stroke-width="0.55"/><path d="M16.4 0.3 V6.6 H22.5" fill="#f3f3f3" stroke="#c2c2c2" stroke-width="0.45"/><g transform="translate(4.4 8.4)"><rect x="0" y="0" width="14.4" height="14.4" rx="1.7" fill="url(#g96)"/><path d="M6.4 4.9 L14.4 12 V13 H2.6 Z" fill="url(#g98)"/><path d="M0 10.4 L5 5.1 Q6.2 4 7.4 5.1 L9.4 7.1 L3.6 13 H0 Z" fill="url(#g97)"/><path d="M0 12.5 H14.4 V12.7 Q14.4 14.4 12.7 14.4 H1.7 Q0 14.4 0 12.7 Z" fill="#2ea6ea"/><circle cx="10.6" cy="2.9" r="1.35" fill="#f1f9ff"/></g></svg>
<div class="badge" style="left:2120.6px;top:555.4px;width:17.6px;height:17.6px"></div>
<div class="lbl" style="left:2143.6px;top:555.2px">IMG_20220704<br>_160529</div>
<svg style="left:2299.8px;top:421.6px" width="91.2" height="121.6" viewBox="0 0 22.8 30.4"><defs><linearGradient id="g99" x1="0" y1="0.2" x2="1" y2="0.6"><stop offset="0" stop-color="#1b6acc"/><stop offset="0.55" stop-color="#2a64c8"/><stop offset="1" stop-color="#5649b6"/></linearGradient><linearGradient id="g100" x1="0" y1="1" x2="1" y2="0"><stop offset="0" stop-color="#3fb4f2"/><stop offset="1" stop-color="#74d2fb"/></linearGradient><linearGradient id="g101" x1="0" y1="0" x2="1" y2="1"><stop offset="0" stop-color="#3193e4"/><stop offset="1" stop-color="#2878d6"/></linearGradient></defs><path d="M0.3 0.3 H16.4 L22.5 6.6 V30 H0.3 Z" fill="#fdfdfd" stroke="#a9a9a9" stroke-width="0.55"/><path d="M16.4 0.3 V6.6 H22.5" fill="#f3f3f3" stroke="#c2c2c2" stroke-width="0.45"/><g transform="translate(4.4 8.4)"><rect x="0" y="0" width="14.4" height="14.4" rx="1.7" fill="url(#g99)"/><path d="M6.4 4.9 L14.4 12 V13 H2.6 Z" fill="url(#g101)"/><path d="M0 10.4 L5 5.1 Q6.2 4 7.4 5.1 L9.4 7.1 L3.6 13 H0 Z" fill="url(#g100)"/><path d="M0 12.5 H14.4 V12.7 Q14.4 14.4 12.7 14.4 H1.7 Q0 14.4 0 12.7 Z" fill="#2ea6ea"/><circle cx="10.6" cy="2.9" r="1.35" fill="#f1f9ff"/></g></svg>
<div class="badge" style="left:2275.6px;top:555.4px;width:17.6px;height:17.6px"></div>
<div class="lbl" style="left:2298.6px;top:555.2px">IMG_20220704<br>_160618</div>
<svg style="left:2454.8px;top:421.6px" width="91.2" height="121.6" viewBox="0 0 22.8 30.4"><defs><linearGradient id="g102" x1="0" y1="0.2" x2="1" y2="0.6"><stop offset="0" stop-color="#1b6acc"/><stop offset="0.55" stop-color="#2a64c8"/><stop offset="1" stop-color="#5649b6"/></linearGradient><linearGradient id="g103" x1="0" y1="1" x2="1" y2="0"><stop offset="0" stop-color="#3fb4f2"/><stop offset="1" stop-color="#74d2fb"/></linearGradient><linearGradient id="g104" x1="0" y1="0" x2="1" y2="1"><stop offset="0" stop-color="#3193e4"/><stop offset="1" stop-color="#2878d6"/></linearGradient></defs><path d="M0.3 0.3 H16.4 L22.5 6.6 V30 H0.3 Z" fill="#fdfdfd" stroke="#a9a9a9" stroke-width="0.55"/><path d="M16.4 0.3 V6.6 H22.5" fill="#f3f3f3" stroke="#c2c2c2" stroke-width="0.45"/><g transform="translate(4.4 8.4)"><rect x="0" y="0" width="14.4" height="14.4" rx="1.7" fill="url(#g102)"/><path d="M6.4 4.9 L14.4 12 V13 H2.6 Z" fill="url(#g104)"/><path d="M0 10.4 L5 5.1 Q6.2 4 7.4 5.1 L9.4 7.1 L3.6 13 H0 Z" fill="url(#g103)"/><path d="M0 12.5 H14.4 V12.7 Q14.4 14.4 12.7 14.4 H1.7 Q0 14.4 0 12.7 Z" fill="#2ea6ea"/><circle cx="10.6" cy="2.9" r="1.35" fill="#f1f9ff"/></g></svg>
<div class="badge" style="left:2430.6px;top:555.4px;width:17.6px;height:17.6px"></div>
<div class="lbl" style="left:2453.6px;top:555.2px">IMG_20220704<br>_160621</div>
<svg style="left:2609.8px;top:421.6px" width="91.2" height="121.6" viewBox="0 0 22.8 30.4"><defs><linearGradient id="g105" x1="0" y1="0.2" x2="1" y2="0.6"><stop offset="0" stop-color="#1b6acc"/><stop offset="0.55" stop-color="#2a64c8"/><stop offset="1" stop-color="#5649b6"/></linearGradient><linearGradient id="g106" x1="0" y1="1" x2="1" y2="0"><stop offset="0" stop-color="#3fb4f2"/><stop offset="1" stop-color="#74d2fb"/></linearGradient><linearGradient id="g107" x1="0" y1="0" x2="1" y2="1"><stop offset="0" stop-color="#3193e4"/><stop offset="1" stop-color="#2878d6"/></linearGradient></defs><path d="M0.3 0.3 H16.4 L22.5 6.6 V30 H0.3 Z" fill="#fdfdfd" stroke="#a9a9a9" stroke-width="0.55"/><path d="M16.4 0.3 V6.6 H22.5" fill="#f3f3f3" stroke="#c2c2c2" stroke-width="0.45"/><g transform="translate(4.4 8.4)"><rect x="0" y="0" width="14.4" height="14.4" rx="1.7" fill="url(#g105)"/><path d="M6.4 4.9 L14.4 12 V13 H2.6 Z" fill="url(#g107)"/><path d="M0 10.4 L5 5.1 Q6.2 4 7.4 5.1 L9.4 7.1 L3.6 13 H0 Z" fill="url(#g106)"/><path d="M0 12.5 H14.4 V12.7 Q14.4 14.4 12.7 14.4 H1.7 Q0 14.4 0 12.7 Z" fill="#2ea6ea"/><circle cx="10.6" cy="2.9" r="1.35" fill="#f1f9ff"/></g></svg>
<div class="badge" style="left:2585.6px;top:555.4px;width:17.6px;height:17.6px"></div>
<div class="lbl" style="left:2608.6px;top:555.2px">IMG_20220704<br>_160645</div>
<div class="a" id="taskbar"></div>
<div class="a" id="pill"></div>
<svg style="left:30.4px;top:1748px" width="33.6" height="33.6" viewBox="0 0 8.4 8.4"><defs><linearGradient id="win" x1="0" y1="0" x2="1" y2="1"><stop offset="0" stop-color="#4cc2f4"/><stop offset="1" stop-color="#0b6cd0"/></linearGradient></defs><rect x="0" y="0" width="4" height="4" rx="0.3" fill="url(#win)"/><rect x="4.4" y="0" width="4" height="4" rx="0.3" fill="url(#win)"/><rect x="0" y="4.4" width="4" height="4" rx="0.3" fill="url(#win)"/><rect x="4.4" y="4.4" width="4" height="4" rx="0.3" fill="url(#win)"/></svg>
<svg style="left:100.4px;top:1753.2px" width="22.4" height="23.2" viewBox="0 0 5.6 5.8"><circle cx="2.3" cy="2.3" r="1.85" fill="none" stroke="#1f1f1f" stroke-width="0.62"/><path d="M3.75 3.8 L5.1 5.3" stroke="#1f1f1f" stroke-width="0.8" stroke-linecap="round"/></svg>
<div class="t" style="left:137.6px;top:1755.4px;font-size:19.6px;color:#555;">Zoeken</div>
<svg style="left:366.4px;top:1750.4px" width="28" height="28" viewBox="0 0 7 7"><circle cx="3.5" cy="3.5" r="3.2" fill="#f2f8fe" stroke="#3a8ad8" stroke-width="0.5"/><path d="M2.6 1.7 V4.7 L3.6 5.3 L4.9 4.4 L3.7 3.6" fill="none" stroke="#1a66c0" stroke-width="0.6" stroke-linejoin="round"/></svg>
<svg style="left:422px;top:1755.2px" width="26.4" height="23.2" viewBox="0 0 6.6 5.8"><rect x="0" y="0" width="6.6" height="5.8" rx="0.4" fill="#1b1b1b"/><rect x="2.8" y="0.3" width="3.6" height="3" fill="#cfcfcf"/></svg>
<div class="a" style="left:474.4px;top:1734.4px;width:56px;height:61.6px;border-radius:6.4px;background:#f3f7fc"></div>
<svg style="left:485.6px;top:1748px" width="35.2" height="32" viewBox="0 0 8.8 8"><path d="M0.3 1.1 Q0.3 0.4 1 0.4 H3.2 L4.2 1.5 H8 Q8.5 1.5 8.5 2 V7 Q8.5 7.6 8 7.6 H0.8 Q0.3 7.6 0.3 7 Z" fill="#eab12c"/><path d="M0.3 2.5 H8.5 V7 Q8.5 7.6 8 7.6 H0.8 Q0.3 7.6 0.3 7 Z" fill="#fbd552"/><path d="M1.6 5.2 H7.2 V7.6 H1.6 Z" fill="#2477cf"/><path d="M0.3 6.6 H8.5 V7 Q8.5 7.6 8 7.6 H0.8 Q0.3 7.6 0.3 7 Z" fill="#4aa6ea"/></svg>
<div class="a" style="left:491.2px;top:1786.8px;width:25.6px;height:4.4px;border-radius:2.2px;background:#1f6fc4"></div>
<svg style="left:548px;top:1747.6px" width="36" height="36" viewBox="0 0 9 9"><defs><radialGradient id="pb" cx="0.42" cy="0.38" r="0.75"><stop offset="0" stop-color="#cdbbe8"/><stop offset="0.6" stop-color="#9f86cf"/><stop offset="1" stop-color="#6f52ae"/></radialGradient></defs><circle cx="4.5" cy="4.5" r="4.3" fill="url(#pb)"/><path d="M4.5 0.6 A3.9 3.9 0 0 1 8.4 4.5 H4.5 Z" fill="#d9cbef" opacity="0.6"/></svg>
<svg style="left:616px;top:1748px" width="32" height="32" viewBox="0 0 8 8"><path d="M4 0.2 L4.7 3 L7.6 1.8 L5.4 4 L7.4 6.4 L4.7 5.4 L3.8 7.8 L3.2 5.2 L0.4 6 L2.6 4 L0.6 1.9 L3.3 2.9 Z" fill="#4d6680"/><circle cx="4" cy="4.1" r="1.2" fill="#c4d6e6"/></svg>
<div class="a" style="left:628px;top:1787.6px;width:8px;height:3.6px;border-radius:1.8px;background:#5a5f66"></div>
<svg style="left:678.4px;top:1747.2px" width="33.6" height="33.6" viewBox="0 0 8.4 8.4"><circle cx="4.2" cy="4.2" r="3.1" fill="none" stroke="#60779b" stroke-width="1.7" stroke-dasharray="1.5 0.93"/><circle cx="4.2" cy="4.2" r="2.7" fill="#60779b"/><circle cx="4.2" cy="4.2" r="1.9" fill="#cfd8e6"/><circle cx="4.2" cy="4.2" r="1.1" fill="#1f2f4d"/></svg>
<svg style="left:740px;top:1750px" width="38.4" height="28" viewBox="0 0 9.6 7"><rect x="0" y="0" width="9.6" height="7" rx="0.5" fill="#8acdec"/><rect x="0" y="0" width="9.6" height="1.2" fill="#6fbfe6"/><path d="M2.4 2.4 L3.4 4.2 L4.4 2.4 L5.4 4.2" stroke="#4a8fc0" stroke-width="0.6" fill="none"/><rect x="6" y="2.6" width="2.4" height="1.6" fill="#c8e8f8"/></svg>
<div class="a" style="left:756px;top:1787.6px;width:8px;height:3.6px;border-radius:1.8px;background:#5a5f66"></div>
<svg style="left:808px;top:1748px" width="32" height="32" viewBox="0 0 8 8"><rect x="0" y="0" width="8" height="8" rx="0.9" fill="#1b3f78"/><rect x="0" y="0" width="8" height="1.6" rx="0.8" fill="#24579c"/><rect x="2.3" y="2.6" width="1.6" height="1.6" fill="#e2533f"/><rect x="4.2" y="2.6" width="1.6" height="1.6" fill="#86bd4a"/><rect x="2.3" y="4.5" width="1.6" height="1.6" fill="#3b9be6"/><rect x="4.2" y="4.5" width="1.6" height="1.6" fill="#f3bd3a"/></svg>
<svg style="left:872px;top:1748px" width="32" height="32.8" viewBox="0 0 8 8.2"><rect x="0" y="0" width="8" height="8.2" rx="0.6" fill="#1f8cc0"/><path d="M3 1.6 V6.2 H5.8" stroke="#fff" stroke-width="1.2" fill="none"/></svg>
<svg style="left:935.2px;top:1747.2px" width="33.6" height="33.6" viewBox="0 0 8.4 8.4"><circle cx="4.2" cy="4.2" r="4.1" fill="#e33b2e"/><path d="M4.2 4.2 L0.65 2.15 A4.1 4.1 0 0 0 3.9 8.3 L5.9 5.1 Z" fill="#2da94f"/><path d="M4.2 4.2 L6.2 5.3 L3.9 8.3 A4.1 4.1 0 0 0 8.15 3 L4.2 3 Z" fill="#fbc116"/><circle cx="4.2" cy="4.2" r="1.95" fill="#fff"/><circle cx="4.2" cy="4.2" r="1.5" fill="#3b7de0"/></svg>
<div class="a" style="left:948px;top:1787.6px;width:8px;height:3.6px;border-radius:1.8px;background:#5a5f66"></div>
<svg style="left:1002px;top:1754.4px" width="24.8" height="24.8" viewBox="0 0 6.2 6.2"><rect x="0" y="0.2" width="6.2" height="5.8" rx="0.7" fill="#e9ddd6" stroke="#c4b6b0" stroke-width="0.3"/><circle cx="3" cy="3.1" r="1.9" fill="#ec7a3a"/><path d="M2.6 2.2 L4 3.1 L2.6 4 Z" fill="#fdf0e2"/></svg>
<div class="a" style="left:1012px;top:1787.6px;width:8px;height:3.6px;border-radius:1.8px;background:#5a5f66"></div>
<svg style="left:1067.2px;top:1753.6px" width="28" height="20" viewBox="0 0 7 5"><path d="M1 4.2 Q1.4 1 3.5 1 Q5.6 1 6 4.2" fill="none" stroke="#3f8f8c" stroke-width="1.3" stroke-linecap="round"/></svg>
<div class="a" style="left:1078px;top:1787.6px;width:8px;height:3.6px;border-radius:1.8px;background:#5a5f66"></div>
<svg style="left:1126px;top:1745.6px" width="44" height="35.2" viewBox="0 0 11 8.8"><rect x="5.6" y="0.2" width="4.8" height="3.6" rx="0.5" fill="#ee9a5e"/><rect x="0" y="2" width="6.6" height="4.8" rx="0.6" fill="#1f62b6"/><rect x="3.6" y="3.4" width="6.4" height="5" rx="0.6" fill="#2a78d0"/><rect x="1.2" y="5" width="3.6" height="2.8" rx="0.4" fill="#174f9c"/></svg>
<div class="a" style="left:1140px;top:1787.6px;width:8px;height:3.6px;border-radius:1.8px;background:#5a5f66"></div>
<svg style="left:1192px;top:1748px" width="36" height="34.4" viewBox="0 0 9 8.6"><rect x="0" y="0" width="9" height="8.6" rx="1.4" fill="#1f58c6"/><rect x="1.7" y="2.6" width="5.6" height="3.6" rx="0.5" fill="#f4f8ff"/><circle cx="4.7" cy="4.2" r="0.8" fill="#1f58c6"/></svg>
<svg style="left:1256px;top:1748px" width="34.4" height="34.4" viewBox="0 0 8.6 8.6"><defs><linearGradient id="gr" x1="0" y1="0" x2="1" y2="1"><stop offset="0" stop-color="#52c27a"/><stop offset="1" stop-color="#22b0a0"/></linearGradient></defs><rect x="0" y="0" width="8.6" height="8.6" rx="1.3" fill="url(#gr)"/><circle cx="3.7" cy="5.1" r="1.8" fill="none" stroke="#e9fbf1" stroke-width="0.8"/><path d="M4.8 3.6 L6.4 2" stroke="#e9fbf1" stroke-width="0.8" stroke-linecap="round"/></svg>
<svg style="left:1317.6px;top:1747.2px" width="40.8" height="35.2" viewBox="0 0 10.2 8.8"><path d="M5.1 0.2 L10 4.4 L5.1 8.6 L0.2 4.4 Z" fill="#e0622a"/><path d="M5.1 1.6 L8.2 4.4 L5.1 7.2 L2 4.4 Z" fill="#f6a03a"/><ellipse cx="5.1" cy="4.4" rx="2" ry="1.3" fill="#fdf3e0"/><circle cx="5.3" cy="4.4" r="0.9" fill="#2f3a4a"/></svg>
<svg style="left:1386.4px;top:1750.4px" width="33.6" height="29.6" viewBox="0 0 8.4 7.4"><path d="M0.8 0.8 H7.6 M2.6 0.8 V6.6 M5.8 0.8 V5.2 Q5.8 6.6 7.8 6.4 M0.4 3.6 H3.6 M1 6.6 Q2.4 6 2.6 4.6" stroke="#8c8f80" stroke-width="0.9" fill="none"/></svg>
<svg style="left:1449.6px;top:1748px" width="36" height="33.6" viewBox="0 0 9 8.4"><circle cx="5.2" cy="4.8" r="3.1" fill="#e4e9f0" stroke="#7f8da6" stroke-width="0.55"/><path d="M0.6 1 H5.4 M0.6 2.6 H3.6 M0.6 4.2 H2.6 M0.6 5.8 H2.4" stroke="#8190aa" stroke-width="0.7"/><path d="M3.4 6.6 L7 3" stroke="#9aa6ba" stroke-width="0.6"/></svg>
<div class="a" style="left:1464px;top:1787.6px;width:8px;height:3.6px;border-radius:1.8px;background:#5a5f66"></div>
<svg style="left:1518.4px;top:1748px" width="24" height="32.8" viewBox="0 0 6 8.2"><rect x="0" y="0" width="6" height="8.2" rx="0.8" fill="#fbfbfa"/><path d="M1.9 2.9 L3.3 1.7 V6.4" stroke="#4a4a3e" stroke-width="1" fill="none"/></svg>
<div class="a" style="left:1526px;top:1787.6px;width:8px;height:3.6px;border-radius:1.8px;background:#5a5f66"></div>
<svg style="left:1578px;top:1749.6px" width="30.4" height="28.8" viewBox="0 0 7.6 7.2"><ellipse cx="3.8" cy="3.6" rx="3.7" ry="3.5" fill="#9ac43a"/><path d="M2 4.8 Q1.2 4.8 1.2 4 Q1.2 3.3 2 3.2 Q2.3 2.2 3.4 2.2 Q4.3 2.2 4.7 2.9 Q5.9 2.8 6.1 3.9 Q6.2 4.8 5.3 4.8 Z" fill="#f8fcef"/></svg>
<svg style="left:1641.6px;top:1748px" width="35.2" height="32.8" viewBox="0 0 8.8 8.2"><path d="M0.8 0.8 H4.4 M1.2 0.8 V3.6 H3 Q4.4 3.6 4.4 5.4 Q4.4 7.2 2.4 7.2 H0.6" stroke="#7f7aa8" stroke-width="0.95" fill="none"/><path d="M6.6 0.6 V7.4" stroke="#c65a5a" stroke-width="1.1"/><path d="M5.2 1.6 L6.6 0.6" stroke="#c65a5a" stroke-width="0.8"/><path d="M8 0.8 V7.2" stroke="#8a86b8" stroke-width="0.6"/></svg>
<svg style="left:1708px;top:1748px" width="32" height="32" viewBox="0 0 8 8"><path d="M4 4.3 L4 0.4 M4 4.3 L7.6 3.1 M4 4.3 L6.3 7.5 M4 4.3 L1.7 7.5 M4 4.3 L0.4 3.1" stroke="#35a5e2" stroke-width="0.95" stroke-linecap="round"/></svg>
<svg style="left:1768px;top:1745.6px" width="36.8" height="36.8" viewBox="0 0 9.2 9.2"><circle cx="4.6" cy="4.2" r="3.9" fill="#3c8f3a"/><path d="M1 2.8 Q3.4 0.2 7 1.4 Q6 3.6 1 2.8Z" fill="#2a5fb0"/><path d="M2 5.6 Q5 3.4 8.4 4.8 Q6 8 2 5.6Z" fill="#e8c83a"/><path d="M1.2 3.4 Q4 4.6 7.8 2.6 L8.3 3.6 Q4.4 5.6 1 4.4 Z" fill="#2f7a2f"/><path d="M4.6 6.4 L6.2 8 L4.6 9.2 L3 8 Z" fill="#2f7a2f"/></svg>
<div class="a" style="left:1784px;top:1787.6px;width:8px;height:3.6px;border-radius:1.8px;background:#5a5f66"></div>
<svg style="left:1836px;top:1748px" width="31.2" height="32" viewBox="0 0 7.8 8"><circle cx="3.9" cy="4" r="3.8" fill="#2b86d6"/><path d="M1.4 2 Q3.4 0.6 5.4 1.8 Q4.2 4 1.8 4.4 Z" fill="#7fd0f0"/><path d="M3.8 4.8 Q5.8 4 7 5.4 Q5.8 7.6 3.8 7.2 Z" fill="#5fb8e8"/><path d="M5.6 2.4 L7.2 3.4" stroke="#9adcf4" stroke-width="0.8"/></svg>
<svg style="left:2866.8px;top:1759.6px" width="18.4" height="11.2" viewBox="0 0 4.6 2.8"><path d="M0.5 2.3 L2.3 0.5 L4.1 2.3" stroke="#222" stroke-width="0.7" fill="none" stroke-linecap="round" stroke-linejoin="round"/></svg>
<div class="t" style="left:2912px;top:1745.2px;font-size:17.6px;color:#4a4a4a;">NLD</div>
<div class="t" style="left:2916px;top:1769.28px;font-size:15px;color:#2a2a2a;font-weight:bold;">BEP</div>
<svg style="left:2972px;top:1752px" width="28" height="24" viewBox="0 0 7 6"><rect x="0.4" y="0.4" width="4.8" height="3.8" rx="0.5" fill="none" stroke="#333" stroke-width="0.65"/><path d="M1.8 5.5 H3.8" stroke="#333" stroke-width="0.65"/><circle cx="5.4" cy="1.6" r="1.1" fill="#e8eef6" stroke="#333" stroke-width="0.45"/><rect x="4.5" y="2.9" width="1.9" height="2.6" rx="0.3" fill="#e8eef6" stroke="#333" stroke-width="0.45"/></svg>
<svg style="left:3007.6px;top:1755.6px" width="20" height="18.4" viewBox="0 0 5 4.6"><path d="M0.3 1.6 H1.3 L2.6 0.4 V4.2 L1.3 3 H0.3 Z" fill="none" stroke="#333" stroke-width="0.5" stroke-linejoin="round"/><path d="M3.4 1.3 Q4.1 2.3 3.4 3.3" stroke="#888" stroke-width="0.45" fill="none"/></svg>
<div class="t" style="right:63.2px;top:1744.12px;font-size:16.6px;color:#3a3a3a;">7:55</div>
<div class="t" style="right:63.2px;top:1768px;font-size:16.8px;color:#3a3a3a;">2/08/2023</div>
<svg style="left:3147.2px;top:1752px" width="24.8" height="24.8" viewBox="0 0 6.2 6.2"><circle cx="3.1" cy="3.1" r="3" fill="#1f78d8"/><path d="M2 2.3 H4.2 M2 3.3 H4.2 M2.5 4.3 H3.7" stroke="#cfe4fa" stroke-width="0.45"/></svg>
</div>
</body>
</html>
